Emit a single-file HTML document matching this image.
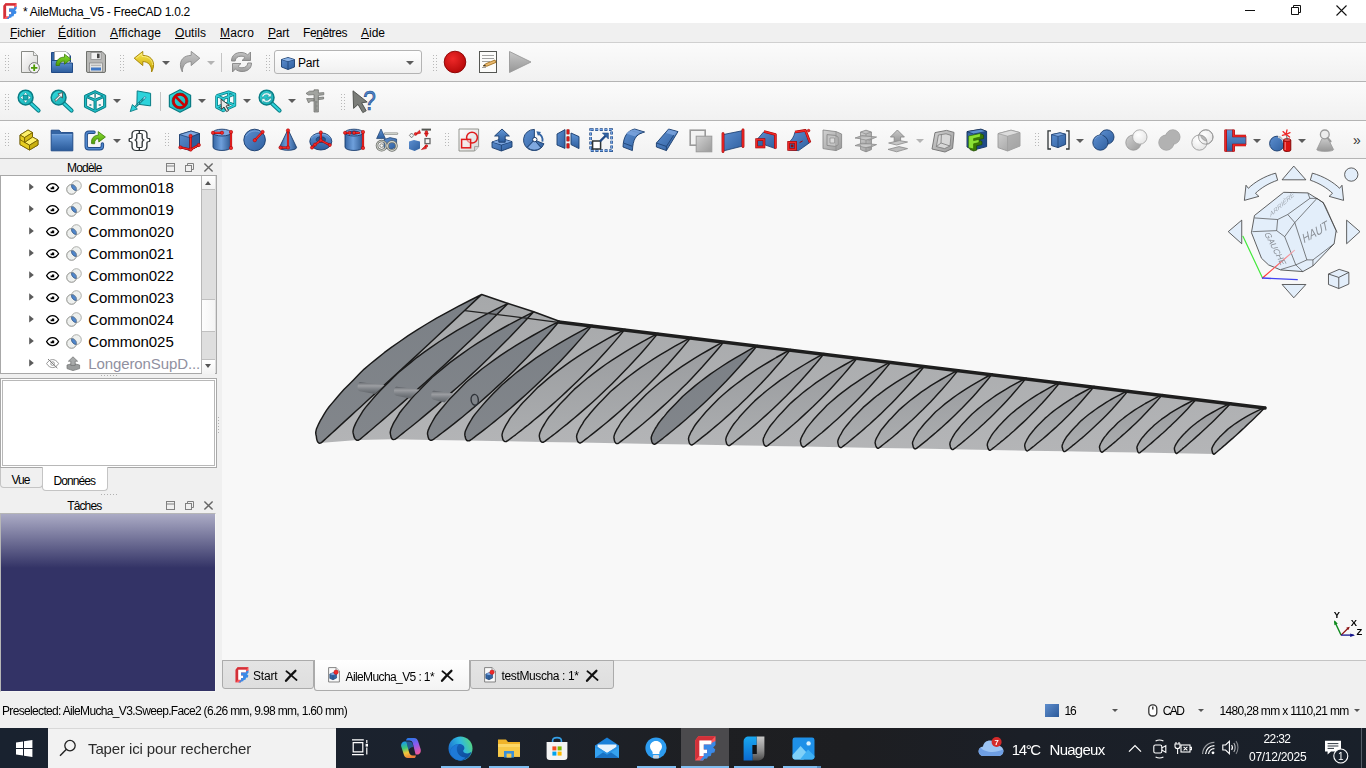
<!DOCTYPE html>
<html lang="fr"><head><meta charset="utf-8"><title>* AileMucha_V5 - FreeCAD 1.0.2</title>
<style>
html,body{margin:0;padding:0;}
body{width:1366px;height:768px;overflow:hidden;position:relative;background:#f0f0f0;font-family:"Liberation Sans",sans-serif;font-size:12px;color:#000;}
.t{position:absolute;white-space:pre;}
.a{position:absolute;}
svg{position:absolute;overflow:visible;}
.u{text-decoration:underline;text-underline-offset:1px;}
.tb{position:absolute;left:0;width:1366px;background:linear-gradient(#fbfbfb,#f1f1f1);border-bottom:1px solid #b4b4b4;}
.hd{position:absolute;width:3px;height:20px;background-image:radial-gradient(circle,#b8b8b8 0.6px,transparent 0.9px);background-size:3px 3px;}
.dd{position:absolute;width:0;height:0;border-left:4px solid transparent;border-right:4px solid transparent;border-top:4.4px solid #5c5c5c;}
.dd.g{border-top-color:#b4b4b4;}
</style></head><body>
<div class="a" style="left:0;top:0;width:1366px;height:23px;background:#fff"></div>
<span class="t " style="left:23.0px;top:3.8px;font-size:12px;line-height:17px;color:#000;letter-spacing:-0.281px;">* AileMucha_V5 - FreeCAD 1.0.2</span>
<div class="a" style="left:0;top:23px;width:1366px;height:19px;background:#f0f0f0;border-bottom:1px solid #d0d0d0"></div>
<span class="t" style="left:10px;top:25px;font-size:12px;line-height:16px;letter-spacing:-0.144px"><span class="u">F</span>ichier</span>
<span class="t" style="left:58px;top:25px;font-size:12px;line-height:16px;letter-spacing:0.187px"><span class="u">É</span>dition</span>
<span class="t" style="left:110px;top:25px;font-size:12px;line-height:16px;letter-spacing:0.131px"><span class="u">A</span>ffichage</span>
<span class="t" style="left:175px;top:25px;font-size:12px;line-height:16px;letter-spacing:0.054px"><span class="u">O</span>utils</span>
<span class="t" style="left:220px;top:25px;font-size:12px;line-height:16px;letter-spacing:0.132px"><span class="u">M</span>acro</span>
<span class="t" style="left:268px;top:25px;font-size:12px;line-height:16px;letter-spacing:-0.252px"><span class="u">P</span>art</span>
<span class="t" style="left:303px;top:25px;font-size:12px;line-height:16px;letter-spacing:-0.419px">Fe<span class="u">n</span>êtres</span>
<span class="t" style="left:361px;top:25px;font-size:12px;line-height:16px;letter-spacing:-0.004px"><span class="u">A</span>ide</span>
<div class="tb" style="top:43px;height:38px"></div>
<div class="tb" style="top:82px;height:38px"></div>
<div class="tb" style="top:121px;height:37px"></div>
<svg width="0" height="0" style="left:0;top:0"><defs>
<linearGradient id="gBlue" x1="0" y1="0" x2="1" y2="1"><stop offset="0" stop-color="#5d8fd0"/><stop offset="1" stop-color="#2f5f9f"/></linearGradient>
<linearGradient id="gBlueV" x1="0" y1="0" x2="0" y2="1"><stop offset="0" stop-color="#6296d6"/><stop offset="1" stop-color="#2c5c9c"/></linearGradient>
<linearGradient id="gBlueH" x1="0" y1="0" x2="1" y2="0"><stop offset="0" stop-color="#3465a4"/><stop offset="0.45" stop-color="#6fa0dc"/><stop offset="1" stop-color="#2c5890"/></linearGradient>
<linearGradient id="gGray" x1="0" y1="0" x2="1" y2="1"><stop offset="0" stop-color="#d2d2d2"/><stop offset="1" stop-color="#9a9a9a"/></linearGradient>
<linearGradient id="gGrayV" x1="0" y1="0" x2="0" y2="1"><stop offset="0" stop-color="#c8c8c8"/><stop offset="1" stop-color="#969696"/></linearGradient>
<linearGradient id="gYel" x1="0" y1="0" x2="0" y2="1"><stop offset="0" stop-color="#fce94f"/><stop offset="1" stop-color="#c4a000"/></linearGradient>
<linearGradient id="gGreen" x1="0" y1="0" x2="0" y2="1"><stop offset="0" stop-color="#8ae234"/><stop offset="1" stop-color="#4e9a06"/></linearGradient>
<linearGradient id="gPaper" x1="0" y1="0" x2="1" y2="1"><stop offset="0" stop-color="#ffffff"/><stop offset="1" stop-color="#d6d6d4"/></linearGradient>
<linearGradient id="gTeal" x1="0" y1="0" x2="1" y2="1"><stop offset="0" stop-color="#34e0e2"/><stop offset="1" stop-color="#16a9b0"/></linearGradient>
<radialGradient id="gRed" cx="0.4" cy="0.35" r="0.7"><stop offset="0" stop-color="#ef2929"/><stop offset="1" stop-color="#b40808"/></radialGradient>
</defs></svg>
<svg style="left:3px;top:2.9px" width="14" height="16" viewBox="255 105 280 335"><path d="M258 165 L300 110 H535 V175 L365 440 H258 Z" fill="#ff5a5e"/><path d="M258 165 L300 110 H535 L480 165 H315 V380 L258 440 Z" fill="#d23038"/>
<path d="M315 165 H480 V222 H375 V290 H420 V340 H375 V380 H315 Z" fill="#fff"/>
<path d="M535 175 V228 L503 262 L532 290 L520 332 L482 336 L470 380 L432 386 L420 412 L382 416 L365 440 H320 L375 380 V340 H420 V290 H375 V222 H480 V200 Z" fill="#3a8ae8"/></svg>
<svg style="left:1240px;top:5px" width="120" height="12" viewBox="0 0 120 12"><g fill="none" stroke="#111" stroke-width="1"><path d="M5 5.5 H15"/><path d="M51.5 2.5 H58.5 V9.5 H51.5 Z" /><path d="M53.5 2.5 V0.5 H60.5 V7.5 H58.5"/><path d="M96.5 0.5 L106.5 10.5 M106.5 0.5 L96.5 10.5" stroke-width="1.1"/></g></svg>
<div class="hd" style="left:4px;top:54px;height:17px;width:6px"></div>
<svg style="left:20px;top:50px" width="24" height="24" viewBox="0 0 24 24"><path d="M1.5 1.5 H13.5 L17.5 5.5 V22.5 H1.5 Z" fill="url(#gPaper)" stroke="#888a85" stroke-width="1"/><path d="M13.5 1.5 V5.5 H17.5" fill="#eee" stroke="#888a85" stroke-width="0.8"/>
<circle cx="14.2" cy="17.8" r="5.2" fill="#f4f4f4" stroke="#666" stroke-width="0.9"/><path d="M14.2 14.6 V21 M11 17.8 H17.4" stroke="#4e9a06" stroke-width="1.8"/></svg>
<svg style="left:50px;top:50px" width="24" height="24" viewBox="0 0 24 24"><path d="M1.5 2.5 H17 L20.5 6 V12 H1.5 Z" fill="#3465a4" stroke="#204a87"/><path d="M4.5 1.5 H16 L19.5 5 V14 H4.5 Z" fill="#fff" stroke="#999" stroke-width="0.7"/>
<path d="M1.5 10.5 H8 L9.5 13 H22.5 V22.5 H1.5 Z" fill="url(#gBlueV)" stroke="#204a87"/>
<path d="M6 15.5 C6 9.5 10 7 14.5 7.2 L14.5 4.2 L21 9.2 L14.5 14.2 L14.5 11.2 C11.5 11 9.5 12.5 9.5 15.5 Z" fill="url(#gGreen)" stroke="#3a7a04" stroke-width="0.8"/></svg>
<svg style="left:84px;top:50px" width="24" height="24" viewBox="0 0 24 24"><path d="M2.5 1.5 H18 L21.5 5 V21 Q21.5 22.5 20 22.5 H4 Q2.5 22.5 2.5 21 Z" fill="#b8b8b6" stroke="#6f716d" stroke-width="1"/>
<rect x="7" y="2.5" width="10" height="7" fill="#f2f2f2" stroke="#777" stroke-width="0.6"/><rect x="13" y="3.6" width="2.6" height="4.6" fill="#444"/>
<rect x="5.5" y="13" width="13" height="9" fill="#e4e4e2" stroke="#777" stroke-width="0.6"/><rect x="7" y="17.5" width="10" height="3" fill="#3f77c4"/><path d="M7 15.3 H17" stroke="#9a9a9a" stroke-width="0.8"/></svg>
<div class="hd" style="left:119px;top:54px;height:17px;width:6px"></div>
<svg style="left:133px;top:50px" width="24" height="24" viewBox="0 0 24 24"><path d="M1.2 8.2 L9.8 1.4 L9.8 5.4 C17 5.4 21.6 10 20.4 17 C19.9 19.5 19 21.4 18.6 22 C18.8 15.8 15.5 11.6 9.8 11.6 L9.8 15.6 Z" fill="url(#gYel)" stroke="#a08000" stroke-width="0.9" stroke-linejoin="round"/><path d="M3 8.2 L9 3.6 L9 6.4 C15.5 6.4 19.5 10 19.6 15" fill="none" stroke="#fff6a0" stroke-width="0.8" opacity="0.8"/></svg>
<div class="dd" style="left:162px;top:60.5px"></div>
<svg style="left:177px;top:50px" width="24" height="24" viewBox="0 0 24 24"><g transform="translate(24 0) scale(-1 1)"><path d="M1.2 8.2 L9.8 1.4 L9.8 5.4 C17 5.4 21.6 10 20.4 17 C19.9 19.5 19 21.4 18.6 22 C18.8 15.8 15.5 11.6 9.8 11.6 L9.8 15.6 Z" fill="url(#gGrayV)" stroke="#8a8a8a" stroke-width="0.9" stroke-linejoin="round"/></g></svg>
<div class="dd g" style="left:207px;top:60.5px"></div>
<div class="a" style="left:221px;top:53px;width:1px;height:19px;background:#c4c4c4"></div>
<svg style="left:230px;top:50px" width="23" height="24" viewBox="0 0 23 24"><g fill="url(#gGrayV)" stroke="#858585" stroke-width="0.9" stroke-linejoin="round"><path d="M1.5 11 C1.5 5 6 2.5 11 2.5 C14 2.5 16 3.4 17.6 5 L20.5 2 L20.5 10.5 L12 10.5 L15 7.6 C14 6.6 12.6 6.2 11 6.2 C7.6 6.2 5.4 8 5.2 11 Z"/>
<path d="M21.5 13 C21.5 19 17 21.5 12 21.5 C9 21.5 7 20.6 5.4 19 L2.5 22 L2.5 13.5 L11 13.5 L8 16.4 C9 17.4 10.4 17.8 12 17.8 C15.4 17.8 17.6 16 17.8 13 Z"/></g></svg>
<div class="hd" style="left:265px;top:54px;height:17px;width:6px"></div>
<div class="a" style="left:274px;top:50px;width:146px;height:22px;border:1px solid #b4b4b4;border-radius:3px;background:linear-gradient(#fefefe,#f0f0f0)"></div>
<svg style="left:279.5px;top:54.8px" width="16" height="16" viewBox="0 0 16 16"><path d="M1.5 4.5 L8 2.5 L14.5 4.5 L14.5 12 L8 14.5 L1.5 12 Z" fill="url(#gBlue)" stroke="#1c3f70" stroke-width="0.9"/><path d="M1.5 4.5 L8 6.5 L14.5 4.5 M8 6.5 V14.5" fill="none" stroke="#1c3f70" stroke-width="0.8"/><path d="M2 4.6 L8 2.9 L14 4.6 L8 6.2 Z" fill="#8db4e6"/></svg>
<span class="t " style="left:298.0px;top:54.7px;font-size:12px;line-height:17px;color:#000;letter-spacing:-0.252px;">Part</span>
<div class="dd" style="left:405.5px;top:60.5px"></div>
<div class="hd" style="left:432px;top:54px;height:17px;width:6px"></div>
<svg style="left:443px;top:50px" width="24" height="24" viewBox="0 0 24 24"><circle cx="12" cy="12" r="10.8" fill="url(#gRed)" stroke="#8a0000" stroke-width="0.9"/></svg>
<svg style="left:478px;top:50px" width="20" height="24" viewBox="0 0 20 24"><rect x="1.5" y="1.5" width="17" height="21" fill="#fcfcfa" stroke="#555753" stroke-width="1"/><path d="M4 5.5 H16 M4 8.5 H16 M4 11.5 H12 M4 17.5 H8" stroke="#8a8a8a" stroke-width="0.8"/>
<path d="M5 16 L8 13.6 L17 10 L18 12.4 L9 16.2 Z" fill="#e9b96e" stroke="#8f5902" stroke-width="0.7"/><path d="M5 16 L7 14.4 L7.8 16.2 Z" fill="#333"/></svg>
<svg style="left:508px;top:50px" width="24" height="24" viewBox="0 0 24 24"><path d="M1.5 1.5 L23 12 L1.5 22.5 Z" fill="url(#gGrayV)" stroke="#9a9a9a" stroke-width="0.9" stroke-linejoin="round"/></svg>
<div class="hd" style="left:4px;top:93px;height:17px;width:6px"></div>
<svg style="left:16.6px;top:89px" width="24" height="24" viewBox="0 0 24 24"><path d="M14 14.5 L21.5 21.5" stroke="#0a7d85" stroke-width="4.2" stroke-linecap="round"/><path d="M14 14.5 L21.5 21.5" stroke="#2fd3da" stroke-width="2.2" stroke-linecap="round"/><circle cx="8.6" cy="8.6" r="7.4" fill="url(#gTeal)" stroke="#0a7d85" stroke-width="1.5"/><path d="M8.6 3.2 L10.8 6 H6.4 Z M8.6 14 L10.8 11.2 H6.4 Z M3.2 8.6 L6 6.4 V10.8 Z M14 8.6 L11.2 6.4 V10.8 Z" fill="#fff" stroke="#0a7d85" stroke-width="0.5"/><rect x="6.6" y="6.6" width="4" height="4" fill="#16a9b0" stroke="#0a7d85" stroke-width="0.5"/></svg>
<svg style="left:49.6px;top:89px" width="24" height="24" viewBox="0 0 24 24"><path d="M14 14.5 L21.5 21.5" stroke="#0a7d85" stroke-width="4.2" stroke-linecap="round"/><path d="M14 14.5 L21.5 21.5" stroke="#2fd3da" stroke-width="2.2" stroke-linecap="round"/><circle cx="8.6" cy="8.6" r="7.4" fill="url(#gTeal)" stroke="#0a7d85" stroke-width="1.5"/><path d="M12.6 3.6 L12.4 9 L10.8 7.6 L6 12.4 L4.6 11 L9.4 6.2 L8 4.8 Z" fill="#f2f2f2" stroke="#444" stroke-width="0.8" stroke-linejoin="round"/></svg>
<svg style="left:83.9px;top:89.6px" width="22.2" height="23" viewBox="0 0 23 24"><path d="M11.5 1.2 L22 6 V17.5 L11.5 22.8 L1 17.5 V6 Z" fill="#f8f8f8" stroke="#0a7d85" stroke-width="1"/>
<g fill="none" stroke="#1fbcc4" stroke-width="2.2" stroke-linejoin="round"><path d="M11.5 1.8 L21.5 6.3 V17.2 L11.5 22.2 L1.5 17.2 V6.3 Z"/><path d="M1.5 6.3 L11.5 10.6 L21.5 6.3 M11.5 10.6 V22.2"/></g>
<g fill="none" stroke="#0a7d85" stroke-width="1" stroke-linejoin="round"><path d="M11.5 0.6 L22.6 5.7 V17.9 L11.5 23.4 L0.4 17.9 V5.7 Z"/><path d="M11.5 3 L19.6 6.4 L11.5 9.4 L3.4 6.4 Z"/><path d="M2.6 8 L10.4 11.4 V20.6 L2.6 16.6 Z"/><path d="M20.4 8 L12.6 11.4 V20.6 L20.4 16.6 Z"/></g>
<path d="M11.5 3.6 V8" stroke="#0a7d85" stroke-width="1.4"/><ellipse cx="6.6" cy="15.6" rx="1.4" ry="0.8" fill="#0a7d85"/><ellipse cx="16.4" cy="15.6" rx="1.4" ry="0.8" fill="#0a7d85"/></svg>
<div class="dd" style="left:113px;top:99px"></div>
<svg style="left:129px;top:89.5px" width="23" height="23" viewBox="0 0 23 23"><path d="M8.2 0.9 L21.6 3.3 L21.6 15.9 L7.9 14.1 Z" fill="#2cd3db" stroke="#0a7d85" stroke-width="1"/>
<path d="M15 8.4 L5.5 17.6" stroke="#0a7d85" stroke-width="2.2"/><path d="M15 8.4 L5.5 17.6" stroke="#7fe0e6" stroke-width="0.9" stroke-dasharray="2 1.4"/>
<path d="M1.2 21.6 L3.4 14.6 L8.4 19 Z" fill="#2cd3db" stroke="#0a7d85" stroke-width="0.9" stroke-linejoin="round"/><ellipse cx="15.4" cy="8" rx="1.6" ry="1" transform="rotate(-45 15.4 8)" fill="#bdf" stroke="#0a7d85" stroke-width="0.6"/></svg>
<div class="a" style="left:160px;top:92px;width:1px;height:19px;background:#c4c4c4"></div>
<svg style="left:168px;top:89.3px" width="24" height="24" viewBox="0 0 24 24"><path d="M12 0.8 L22.6 6.2 V17.8 L12 23.2 L1.4 17.8 V6.2 Z" fill="url(#gTeal)" stroke="#0a7d85" stroke-width="1.2" stroke-linejoin="round"/>
<circle cx="12" cy="12" r="6.6" fill="none" stroke="#c00" stroke-width="2.6"/><path d="M7.4 7.4 L16.6 16.6" stroke="#c00" stroke-width="2.6"/><circle cx="12" cy="12" r="8" fill="none" stroke="#700" stroke-width="0.5"/></svg>
<div class="dd" style="left:198px;top:99px"></div>
<svg style="left:214.5px;top:90px" width="22" height="23" viewBox="0 0 22 23"><path d="M1.2 5.4 L13.6 1.4 L20.4 3.6 V15.6 L8.2 21.4 L1.2 17.4 Z" fill="#f6fbfb"/>
<g fill="none" stroke="#0a7d85" stroke-width="2.8" stroke-linejoin="round"><path d="M1.6 5.6 L8.2 8.6 L19.8 4 M8.2 8.6 V20.8 M1.6 5.6 V17.2 L8.2 20.8 L19.8 15.4 V4 L13.6 1.8 L1.6 5.6 M13.6 1.8 V12.6 L1.6 17.2 M13.6 12.6 L19.8 15.4"/></g>
<g fill="none" stroke="#2fd0d8" stroke-width="1.3" stroke-linejoin="round"><path d="M1.6 5.6 L8.2 8.6 L19.8 4 M8.2 8.6 V20.8 M1.6 5.6 V17.2 L8.2 20.8 L19.8 15.4 V4 L13.6 1.8 L1.6 5.6 M13.6 1.8 V12.6 L1.6 17.2 M13.6 12.6 L19.8 15.4"/></g>
<path d="M6 9.2 L6.4 19.4 L9 17 L11.6 21.6 L13.6 20.6 L11 16 L14.4 15.4 Z" fill="#e8e8e8" stroke="#333" stroke-width="0.9" stroke-linejoin="round"/></svg>
<div class="dd" style="left:243px;top:99px"></div>
<svg style="left:257.8px;top:89px" width="24" height="24" viewBox="0 0 24 24"><path d="M14 14.5 L21.5 21.5" stroke="#0a7d85" stroke-width="4.2" stroke-linecap="round"/><path d="M14 14.5 L21.5 21.5" stroke="#2fd3da" stroke-width="2.2" stroke-linecap="round"/><circle cx="8.6" cy="8.6" r="7.4" fill="url(#gTeal)" stroke="#0a7d85" stroke-width="1.5"/><g fill="#e6fbfc" stroke="#0a7d85" stroke-width="0.5"><path d="M3.6 8 C3.8 5.4 6 3.8 8.6 3.8 C10 3.8 11 4.3 11.8 5 L13.2 3.6 V7.8 H9 L10.4 6.4 C9.9 6 9.3 5.8 8.6 5.8 C7 5.8 5.8 6.6 5.6 8 Z"/><path d="M13.6 9.2 C13.4 11.8 11.2 13.4 8.6 13.4 C7.2 13.4 6.2 12.9 5.4 12.2 L4 13.6 V9.4 H8.2 L6.8 10.8 C7.3 11.2 7.9 11.4 8.6 11.4 C10.2 11.4 11.4 10.6 11.6 9.2 Z"/></g></svg>
<div class="dd" style="left:288px;top:99px"></div>
<svg style="left:305px;top:89px" width="20" height="24" viewBox="0 0 20 24"><g fill="#a2a4a0" stroke="#6a6c68" stroke-width="0.7" stroke-linejoin="round"><path d="M1 4.4 L4.4 2.2 L9 2 V0.8 H13.4 V4 L18.8 3.6 V5.8 L13.4 6.4 V23 H9 V5.6 L3.4 6 Z"/><path d="M1.6 9.6 H9 V12 H5.6 L3.6 14 Z"/><path d="M13.4 8.6 L18.6 8 V10 L13.4 10.6 Z"/></g><path d="M10 13 H12.4 M10 15 H11.6 M10 17 H12.4 M10 19 H11.6 M10 21 H12.4" stroke="#555" stroke-width="0.6"/></svg>
<div class="hd" style="left:340px;top:93px;height:17px;width:6px"></div>
<svg style="left:352px;top:89.5px" width="24" height="24" viewBox="0 0 24 24"><path d="M1 0.8 L1.6 18.4 L6 14.4 L10.8 22.6 L14.2 20.8 L9.6 12.8 L15.2 12 Z" fill="#7b7d79" stroke="#4a4c48" stroke-width="0.9" stroke-linejoin="round"/>
<text x="11.2" y="20.2" font-family="Liberation Sans, sans-serif" font-size="27.5" fill="#4f86cc" stroke="#204a87" stroke-width="0.7" textLength="12.6" lengthAdjust="spacingAndGlyphs">?</text></svg>
<div class="hd" style="left:4px;top:132px;height:16px;width:6px"></div>
<svg style="left:19px;top:129px" width="20" height="22" viewBox="0 0 20 22"><g stroke="#6f5a00" stroke-width="0.8" stroke-linejoin="round"><path d="M1 6 L9 1 L13.5 3.6 V8 L19 11 V16 L10.5 21 L1 15.6 Z" fill="#f2dc3a"/>
<path d="M1 6 L5.6 8.6 L13.5 3.6 L9 1 Z" fill="#fdf06a"/><path d="M5.6 8.6 V13.4 L10.5 16.2 L19 11 L13.5 8 L5.6 13.4" fill="#fdf06a"/><path d="M1 6 V15.6 L10.5 21 V16.2 L5.6 13.4 V8.6 Z" fill="#e6cc20"/><path d="M10.5 16.2 L19 11 V16 L10.5 21 Z" fill="#c9b010"/><path d="M5.6 8.6 L13.5 3.6 V8 L5.6 13.4 Z" fill="#d6bc18"/><path d="M1 10.6 L5.6 13.4" fill="none"/></g></svg>
<svg style="left:50px;top:129px" width="24" height="23" viewBox="0 0 24 23"><path d="M1.2 1.2 H9.2 L11.2 3.6 H22.8 V21.8 H1.2 Z" fill="#3465a4" stroke="#204a87" stroke-width="1" stroke-linejoin="round"/><path d="M1.8 5.6 H22.2 V21.2 H1.8 Z" fill="url(#gBlueV)"/><path d="M1.8 5.6 H22.2" stroke="#8db4e6" stroke-width="0.8"/></svg>
<svg style="left:84px;top:129.5px" width="22" height="21" viewBox="0 0 22 21"><path d="M10 2.2 H5 Q2.2 2.2 2.2 5 V16 Q2.2 18.8 5 18.8 H15.6 Q18.4 18.8 18.4 16 V14" fill="none" stroke="#204a87" stroke-width="3.4" stroke-linecap="round"/><path d="M10 2.2 H5 Q2.2 2.2 2.2 5 V16 Q2.2 18.8 5 18.8 H15.6 Q18.4 18.8 18.4 16 V14" fill="none" stroke="#4f86cc" stroke-width="1.6" stroke-linecap="round"/>
<path d="M7.6 13.6 C7 8 10 5.4 14.4 5.2 L14.2 1.6 L21.4 7 L14.8 12 L14.6 8.6 C11.8 8.8 10.4 10.4 10.6 13.8 Z" fill="url(#gGreen)" stroke="#3a7a04" stroke-width="0.8" stroke-linejoin="round"/></svg>
<div class="dd" style="left:113px;top:138.5px"></div>
<svg style="left:128px;top:128px;will-change:transform" width="24" height="24" viewBox="0 0 24 24"><g font-family="Liberation Sans, sans-serif" font-size="20.5" font-weight="bold" fill="#fff" stroke="#2e3436" stroke-width="2.2" stroke-linejoin="round" paint-order="stroke"><text transform="translate(1.4 18.4) scale(1.25 1)">{</text><text transform="translate(11.6 18.4) scale(1.25 1)">}</text></g></svg>
<div class="hd" style="left:164px;top:132px;height:16px;width:6px"></div>
<svg style="left:178px;top:129px" width="23" height="23" viewBox="0 0 23 23"><path d="M1.5 5.6 L13 2 L21.5 4.6 V16.4 L11.5 21.4 L1.5 18.2 Z" fill="url(#gBlue)" stroke="#1a3c6c" stroke-width="0.9" stroke-linejoin="round"/><path d="M1.5 5.6 L11.5 8.6 L21.5 4.6 L13 2 Z" fill="#7fa8e0" stroke="#1a3c6c" stroke-width="0.7" stroke-linejoin="round"/><path d="M11.5 8.6 V21.4 L21.5 16.4 V4.6 Z" fill="#2f5c9c" stroke="#1a3c6c" stroke-width="0.7" stroke-linejoin="round"/><path d="M2.4 18.4 L12.6 20.6 L20.8 16 M12.6 20.6 V7" fill="none" stroke="#a40000" stroke-width="2.2" stroke-linecap="round"/><path d="M2.4 18.4 L12.6 20.6 L20.8 16 M12.6 20.6 V7" fill="none" stroke="#ef2929" stroke-width="1.4" stroke-linecap="round"/><circle cx="2.4" cy="18.4" r="1.7" fill="#ef2929" stroke="#a40000" stroke-width="0.5"/><circle cx="12.6" cy="20.6" r="1.7" fill="#ef2929" stroke="#a40000" stroke-width="0.5"/><circle cx="20.8" cy="16" r="1.7" fill="#ef2929" stroke="#a40000" stroke-width="0.5"/><circle cx="12.6" cy="7" r="1.7" fill="#ef2929" stroke="#a40000" stroke-width="0.5"/></svg>
<svg style="left:211px;top:128px" width="22" height="24" viewBox="0 0 22 24"><path d="M2 4.6 V19 C2 23.6 20 23.6 20 19 V4.6 Z" fill="url(#gBlueH)" stroke="#1a3c6c" stroke-width="0.9"/><ellipse cx="11" cy="4.6" rx="9" ry="3.4" fill="#7fa8e0" stroke="#1a3c6c" stroke-width="0.9"/><path d="M2 4.8 H11 M20 4 V20" fill="none" stroke="#a40000" stroke-width="2.2" stroke-linecap="round"/><path d="M2 4.8 H11 M20 4 V20" fill="none" stroke="#ef2929" stroke-width="1.4" stroke-linecap="round"/><circle cx="2" cy="4.8" r="1.7" fill="#ef2929" stroke="#a40000" stroke-width="0.5"/><circle cx="11" cy="4.8" r="1.7" fill="#ef2929" stroke="#a40000" stroke-width="0.5"/><circle cx="20" cy="4" r="1.7" fill="#ef2929" stroke="#a40000" stroke-width="0.5"/><circle cx="20" cy="20" r="1.7" fill="#ef2929" stroke="#a40000" stroke-width="0.5"/></svg>
<svg style="left:243px;top:128px" width="24" height="24" viewBox="0 0 24 24"><circle cx="11.6" cy="12" r="10.8" fill="url(#gBlue)" stroke="#1a3c6c" stroke-width="0.9"/><path d="M3 8 C6 2.6 14 1.6 18.6 5" fill="none" stroke="#8db4e6" stroke-width="0.9" opacity="0.7"/><path d="M11.8 12.2 L19.6 4" fill="none" stroke="#a40000" stroke-width="2.2" stroke-linecap="round"/><path d="M11.8 12.2 L19.6 4" fill="none" stroke="#ef2929" stroke-width="1.4" stroke-linecap="round"/><circle cx="11.8" cy="12.2" r="1.7" fill="#ef2929" stroke="#a40000" stroke-width="0.5"/><circle cx="19.6" cy="4" r="1.7" fill="#ef2929" stroke="#a40000" stroke-width="0.5"/></svg>
<svg style="left:278px;top:128px" width="20" height="24" viewBox="0 0 20 24"><path d="M10 1.6 L18.6 19.4 C18.6 23.2 1.4 23.2 1.4 19.4 Z" fill="url(#gBlueH)" stroke="#1a3c6c" stroke-width="0.9" stroke-linejoin="round"/><path d="M10 2.4 V19.6 H2.6" fill="none" stroke="#a40000" stroke-width="2.2" stroke-linecap="round"/><path d="M10 2.4 V19.6 H2.6" fill="none" stroke="#ef2929" stroke-width="1.4" stroke-linecap="round"/><circle cx="10" cy="2.4" r="1.7" fill="#ef2929" stroke="#a40000" stroke-width="0.5"/><circle cx="10" cy="19.6" r="1.7" fill="#ef2929" stroke="#a40000" stroke-width="0.5"/><circle cx="2.6" cy="19.6" r="1.7" fill="#ef2929" stroke="#a40000" stroke-width="0.5"/></svg>
<svg style="left:309px;top:130px" width="24" height="21" viewBox="0 0 24 21"><ellipse cx="11.8" cy="11.4" rx="11" ry="8.6" fill="url(#gBlueV)" stroke="#1a3c6c" stroke-width="0.9"/><ellipse cx="11.8" cy="9.6" rx="4.6" ry="2.8" fill="#2a568f" stroke="#1a3c6c" stroke-width="0.8"/><path d="M2 8.6 C4 3 19 2.6 21.6 8.4" fill="none" stroke="#8db4e6" stroke-width="0.9" opacity="0.8"/><path d="M11.8 2.4 V10.4 L20.8 15 M11.8 10.4 L6 14.6 L3 17.6" fill="none" stroke="#a40000" stroke-width="2.2" stroke-linecap="round"/><path d="M11.8 2.4 V10.4 L20.8 15 M11.8 10.4 L6 14.6 L3 17.6" fill="none" stroke="#ef2929" stroke-width="1.4" stroke-linecap="round"/><circle cx="11.8" cy="2.4" r="1.6" fill="#ef2929" stroke="#a40000" stroke-width="0.5"/><circle cx="11.8" cy="10.4" r="1.6" fill="#ef2929" stroke="#a40000" stroke-width="0.5"/><circle cx="20.8" cy="15" r="1.6" fill="#ef2929" stroke="#a40000" stroke-width="0.5"/><circle cx="6" cy="14.6" r="1.6" fill="#ef2929" stroke="#a40000" stroke-width="0.5"/><circle cx="3" cy="17.6" r="1.6" fill="#ef2929" stroke="#a40000" stroke-width="0.5"/></svg>
<svg style="left:343px;top:128px" width="22" height="24" viewBox="0 0 22 24"><path d="M2 4.6 V19 C2 23.6 20 23.6 20 19 V4.6 Z" fill="url(#gBlueH)" stroke="#1a3c6c" stroke-width="0.9"/><ellipse cx="11" cy="4.6" rx="9" ry="3.4" fill="#7fa8e0" stroke="#1a3c6c" stroke-width="0.9"/><ellipse cx="11" cy="4.6" rx="5" ry="1.8" fill="#2a568f" stroke="#1a3c6c" stroke-width="0.6"/><path d="M2 4.8 H7 M11 4.8 H16 M20 4 V20" fill="none" stroke="#a40000" stroke-width="2.2" stroke-linecap="round"/><path d="M2 4.8 H7 M11 4.8 H16 M20 4 V20" fill="none" stroke="#ef2929" stroke-width="1.4" stroke-linecap="round"/><circle cx="2" cy="4.8" r="1.6" fill="#ef2929" stroke="#a40000" stroke-width="0.5"/><circle cx="6.6" cy="4.8" r="1.6" fill="#ef2929" stroke="#a40000" stroke-width="0.5"/><circle cx="11" cy="4.8" r="1.6" fill="#ef2929" stroke="#a40000" stroke-width="0.5"/><circle cx="20" cy="4" r="1.7" fill="#ef2929" stroke="#a40000" stroke-width="0.5"/><circle cx="20" cy="20" r="1.7" fill="#ef2929" stroke="#a40000" stroke-width="0.5"/></svg>
<svg style="left:375px;top:128px" width="23" height="24" viewBox="0 0 23 24"><path d="M6 1 L10.4 10.6 H1.6 Z" fill="url(#gBlueV)" stroke="#1a3c6c" stroke-width="0.7" stroke-linejoin="round"/><path d="M10 5.6 H22" stroke="#888a85" stroke-width="2.4" stroke-linecap="round"/><path d="M10 5.6 H22" stroke="#d3d7cf" stroke-width="1" stroke-linecap="round"/>
<path d="M9 11.6 L15 9.6 L21.6 11 V19 L15 21.6 L9 19.6 Z" fill="url(#gBlue)" stroke="#1a3c6c" stroke-width="0.7" stroke-linejoin="round"/>
<g fill="none" stroke="#6a6c68" stroke-width="2.6"><circle cx="6.6" cy="17.6" r="4.6"/><circle cx="17" cy="18" r="4.4"/></g><g fill="none" stroke="#d3d7cf" stroke-width="1.1"><circle cx="6.6" cy="17.6" r="4.6"/><circle cx="17" cy="18" r="4.4"/></g><circle cx="6.6" cy="17.6" r="1.8" fill="none" stroke="#888a85" stroke-width="1"/></svg>
<svg style="left:408px;top:128px" width="24" height="24" viewBox="0 0 24 24"><path d="M1 13.6 L6 12 L12 13.4 V20.6 L6.6 23 L1 21 Z" fill="url(#gBlue)" stroke="%s" stroke-width="0.7" stroke-linejoin="round"/><path d="M1 13.6 L6.6 15.2 L12 13.4 M6.6 15.2 V23" fill="none" stroke="%s" stroke-width="0.6"/>
<path d="M3.6 5 L5.8 7.4 L3.6 9.8 L1.4 7.4 Z" fill="#eee" stroke="#666" stroke-width="0.8"/><rect x="17" y="10.6" width="5" height="5" fill="#f4f4f4" stroke="#666" stroke-width="1.3"/><path d="M13.6 1.6 H23" stroke="#555753" stroke-width="2"/>
<g fill="#ef2929" stroke="#a40000" stroke-width="0.5" stroke-linejoin="round"><path d="M7 6.4 L11.6 2.2 L12.6 5.2 Z"/><path d="M16.4 5 H20.4 L18.4 9 Z"/><path d="M13.4 21.6 L17.6 17.4 L18.4 20.6 Z"/><circle cx="7.6" cy="6" r="1.4"/><circle cx="18.4" cy="4" r="1.3"/><circle cx="18.4" cy="18" r="1.3"/></g></svg>
<div class="hd" style="left:444px;top:132px;height:16px;width:6px"></div>
<svg style="left:458px;top:128px" width="22" height="24" viewBox="0 0 22 24"><path d="M1 1 H20.6 V18.6 L16.6 23 H1 Z" fill="url(#gPaper)" stroke="#888a85" stroke-width="0.9"/><path d="M20.6 18.6 H16.6 V23" fill="#ddd" stroke="#888a85" stroke-width="0.7"/>
<circle cx="14" cy="9.6" r="5.4" fill="none" stroke="#e01b1b" stroke-width="1.5"/><rect x="3.6" y="11.4" width="9" height="8.4" fill="#fbeaea" fill-opacity="0.5" stroke="#e01b1b" stroke-width="1.5"/></svg>
<svg style="left:491px;top:128px" width="22" height="24" viewBox="0 0 22 24"><path d="M1 14 L11 10.6 L21 13.6 V19 L10.4 23 L1 19.6 Z" fill="url(#gBlue)" stroke="#1a3c6c" stroke-width="0.9" stroke-linejoin="round"/><path d="M1 14 L10.4 17 L21 13.6 M10.4 17 V23" fill="none" stroke="#1a3c6c" stroke-width="0.8"/><path d="M1.6 14 L11 11.2 L20.4 13.7 L10.4 16.4 Z" fill="#7fa8e0"/>
<path d="M11 1 L18.4 8 H14.2 V14.2 H7.8 V8 H3.6 Z" fill="url(#gBlueV)" stroke="#1a3c6c" stroke-width="0.9" stroke-linejoin="round"/></svg>
<svg style="left:523px;top:128px" width="24" height="24" viewBox="0 0 24 24"><path d="M11.4 1.4 A10.6 10.6 0 1 0 21 15.8 L11.4 12 Z" fill="url(#gBlue)" stroke="#1a3c6c" stroke-width="0.9" stroke-linejoin="round"/><path d="M4 19.6 L11.4 12 L18.4 20" fill="none" stroke="#1a3c6c" stroke-width="0.9"/><path d="M11.4 12 L4.4 19.4 A10.4 10.4 0 0 0 18 19.8 Z" fill="#7fa8e0" stroke="#1a3c6c" stroke-width="0.7"/>
<circle cx="11.8" cy="11.6" r="2.2" fill="#fff" stroke="#1a3c6c" stroke-width="1"/><path d="M15 5.4 A7.6 7.6 0 0 1 19.4 13.6" fill="none" stroke="#3465a4" stroke-width="1.8"/><path d="M13.4 3.2 L18 4 L15 8 Z" fill="#3465a4"/></svg>
<svg style="left:556px;top:128px" width="24" height="24" viewBox="0 0 24 24"><path d="M1 6 L9 1.6 V20.4 L1 17 Z" fill="url(#gBlue)" stroke="#1a3c6c" stroke-width="0.9" stroke-linejoin="round"/><path d="M15 5 L23 8.6 V20.6 L15 16.6 Z" fill="url(#gBlueV)" stroke="#1a3c6c" stroke-width="0.9" stroke-linejoin="round"/>
<path d="M12 1.6 V22.6" stroke="#7a0000" stroke-width="3" stroke-dasharray="4.6 2.4"/><path d="M12 1.6 V22.6" stroke="#e01b1b" stroke-width="1.8" stroke-dasharray="4.6 2.4"/></svg>
<svg style="left:589px;top:128px" width="24" height="24" viewBox="0 0 24 24"><rect x="1.6" y="1.6" width="21" height="21" fill="none" stroke="#204a87" stroke-width="2.6" stroke-dasharray="3 1.6"/><rect x="1.6" y="1.6" width="21" height="21" fill="none" stroke="#6f9fe0" stroke-width="1.2" stroke-dasharray="3 1.6"/>
<rect x="3.6" y="13" width="8" height="8" fill="#fff" stroke="#2e3436" stroke-width="1.5"/><path d="M11 13.4 L18 6.4" stroke="#204a87" stroke-width="2.2"/><path d="M13.4 5 H19.4 V11 Z" fill="#3465a4" stroke="#204a87" stroke-width="0.6"/></svg>
<svg style="left:622px;top:128px" width="24" height="24" viewBox="0 0 24 24"><path d="M12.6 1 L22.6 4 C13.4 6.4 11 11.6 10.4 22.6 L1 19 C1.4 8.6 5 3 12.6 1 Z" fill="url(#gBlue)" stroke="#1a3c6c" stroke-width="0.9" stroke-linejoin="round"/><path d="M1.4 15 L10.6 18.4 M10 3 L19.6 5.4" fill="none" stroke="#1a3c6c" stroke-width="0.8"/><path d="M12.6 1.6 L21 4 C17 5 14.6 6.6 13.2 8.4 L4 5.6 C6 3.6 9 2.2 12.6 1.6Z" fill="#7fa8e0" opacity="0.8"/></svg>
<svg style="left:655px;top:128px" width="24" height="24" viewBox="0 0 24 24"><path d="M13.6 1 L23 3.6 L11.4 22.6 L1.4 19 V15 Z" fill="url(#gBlue)" stroke="#1a3c6c" stroke-width="0.9" stroke-linejoin="round"/><path d="M1.4 15 L11.4 18.4 V22.6 M11.4 18.4 L20.4 4.6" fill="none" stroke="#1a3c6c" stroke-width="0.8"/><path d="M13.6 1.6 L22 3.8 L19.6 7.4 L11 5 Z" fill="#7fa8e0" opacity="0.8"/></svg>
<svg style="left:688.5px;top:128.5px" width="24" height="24" viewBox="0 0 24 24"><rect x="1.2" y="1.2" width="15" height="15" fill="#f2f2f2" stroke="#9a9a9a" stroke-width="1.6"/><rect x="7.2" y="7.2" width="15.6" height="15.6" fill="url(#gGray)" stroke="#9a9a9a" stroke-width="1"/></svg>
<svg style="left:721px;top:128.5px" width="24" height="24" viewBox="0 0 24 24"><path d="M2 5.6 L22 1.6 V17 L2 22 Z" fill="url(#gBlue)" stroke="#1a3c6c" stroke-width="0.8"/><path d="M2 4.6 V22.6 M22 0.8 V17.6" stroke="#a40000" stroke-width="2.8" stroke-linecap="round"/><path d="M2 4.6 V22.6 M22 0.8 V17.6" stroke="#ef2929" stroke-width="1.6" stroke-linecap="round"/></svg>
<svg style="left:755px;top:130px" width="22" height="20" viewBox="0 0 22 20"><path d="M2 9.6 L9 1.6 L20.4 4.6 V18.6 L9 14.6 L2 17 Z" fill="url(#gBlue)" stroke="#1a3c6c" stroke-width="0.8" stroke-linejoin="round"/><path d="M9 1.6 L20.4 4.6 V18.6" fill="none" stroke="#a40000" stroke-width="2.6" stroke-linejoin="round"/><path d="M9 1.6 L20.4 4.6 V18.6" fill="none" stroke="#ef2929" stroke-width="1.5" stroke-linejoin="round"/>
<rect x="1.6" y="9.6" width="7.4" height="7.4" fill="#3465a4" stroke="#a40000" stroke-width="2.6"/><rect x="1.6" y="9.6" width="7.4" height="7.4" fill="none" stroke="#ef2929" stroke-width="1.4"/></svg>
<svg style="left:787px;top:128.5px" width="24" height="23" viewBox="0 0 24 23"><path d="M8 3 L18.4 1.4 C20 6 21.6 10 23 13.4 L11.6 21.6 L1.6 21 V13.6 C5 11 7 7.6 8 3 Z" fill="url(#gBlue)" stroke="#1a3c6c" stroke-width="0.8" stroke-linejoin="round"/><path d="M8 3 L18.4 1.4 L23 13.4" fill="none" stroke="#a40000" stroke-width="2.6" stroke-linejoin="round"/><path d="M8 3 L18.4 1.4 L23 13.4" fill="none" stroke="#ef2929" stroke-width="1.5" stroke-linejoin="round"/>
<rect x="1.6" y="13.4" width="7" height="7" fill="#3465a4" stroke="#a40000" stroke-width="2.6"/><rect x="1.6" y="13.4" width="7" height="7" fill="none" stroke="#ef2929" stroke-width="1.4"/><rect x="3.8" y="15.6" width="2.6" height="2.6" fill="#a40000"/><circle cx="21.6" cy="1.6" r="1.3" fill="#ef2929" stroke="#a40000" stroke-width="0.6"/><path d="M12.6 13.6 L15.6 12" stroke="#a40000" stroke-width="1"/></svg>
<svg style="left:822px;top:129px" width="20" height="22" viewBox="0 0 20 22"><path d="M1 1 L14 2.6 L19.6 5 V19 L14 21.6 L1 19.6 Z" fill="url(#gGray)" stroke="#8a8a8a" stroke-width="0.9" stroke-linejoin="round"/><path d="M5 5.6 L13 6.4 L16 8 V16 L13 17.4 L5 16.4 Z" fill="#c4c4c4" stroke="#8a8a8a" stroke-width="0.9"/><path d="M8 9 H12.6 V14 H8 Z" fill="#dadada" stroke="#8a8a8a" stroke-width="0.7"/><path d="M14 2.6 V21.6" stroke="#8a8a8a" stroke-width="0.7"/></svg>
<svg style="left:854px;top:128.5px" width="24" height="24" viewBox="0 0 24 24"><path d="M6.6 3 L12 1.2 L17.4 3 V20.6 L12 22.8 L6.6 20.6 Z" fill="url(#gGray)" stroke="#8a8a8a" stroke-width="0.9" stroke-linejoin="round"/><path d="M6.6 3 L12 5 L17.4 3 M12 5 V22.8" fill="none" stroke="#8a8a8a" stroke-width="0.7"/>
<path d="M1 9 L8 6.6 L22.6 8 L15.6 11 Z M1 16.6 L8 14.2 L22.6 15.6 L15.6 18.6 Z" fill="#b4b4b4" stroke="#8a8a8a" stroke-width="0.8" stroke-linejoin="round"/><path d="M6.6 8.4 V10 L12 11 L17.4 9.6 V8 M6.6 16 V17.6 L12 18.6 L17.4 17.2 V15.6" fill="#c8c8c8" stroke="#8a8a8a" stroke-width="0.6"/></svg>
<svg style="left:887px;top:128.5px" width="22" height="24" viewBox="0 0 22 24"><path d="M10.4 1 L17.4 8 H13.6 V13.4 H7.2 V8 H3.4 Z" fill="url(#gGrayV)" stroke="#8a8a8a" stroke-width="0.9" stroke-linejoin="round"/><path d="M1.6 14 L12.4 11.6 L20.6 13 L9.6 16 Z" fill="#c6c6c6" stroke="#8a8a8a" stroke-width="0.8" stroke-linejoin="round"/><path d="M1 20.4 L12 17.6 L20.6 19.6 L9.6 22.8 Z" fill="#bcbcbc" stroke="#8a8a8a" stroke-width="0.8" stroke-linejoin="round"/></svg>
<div class="dd g" style="left:916px;top:138.5px"></div>
<svg style="left:931px;top:128.5px" width="24" height="24" viewBox="0 0 24 24"><path d="M4 3.6 L15.6 1.4 L23 3.4 L21.6 19.4 L14 23 L1 20 Z" fill="url(#gGray)" stroke="#7a7a7a" stroke-width="1" stroke-linejoin="round"/><path d="M7.4 6 L15 4.8 L20 6.4 L19 17 L13.6 19.6 L5.4 17.6 Z" fill="#d8d8d8" stroke="#7a7a7a" stroke-width="0.8" stroke-linejoin="round"/><path d="M10.4 5.6 L10 14 L5.4 17.6 M10 14 L19 17" fill="none" stroke="#7a7a7a" stroke-width="0.8"/></svg>
<svg style="left:965px;top:128px" width="23" height="24" viewBox="0 0 23 24"><path d="M2 3.6 L16 1.2 L21.6 3.4 V18.6 L8.6 22 L2 19 Z" fill="#3465a4" stroke="#10284c" stroke-width="0.9" stroke-linejoin="round"/><path d="M2 3.6 L8.6 6 L21.6 3.4 L16 1.2 Z" fill="#5b8ed0" stroke="#10284c" stroke-width="0.6"/><path d="M8.6 6 L21.6 3.4 V18.6 L8.6 22 Z" fill="#1f4b88"/>
<path d="M5 8.6 L16.6 6 L18.6 7 V10.6 L11.6 12 V13.6 L15.6 12.8 L17 13.6 V16.6 L11.6 17.8 V22.2 L8.6 23 L5 21.6 Z" fill="#3a7a04" stroke="#1c4a00" stroke-width="0.7" stroke-linejoin="round"/><path d="M3.6 8 L15.4 5.4 V9 L8.6 10.6 V12.6 L14 11.4 V14.6 L8.6 15.8 V21 L3.6 19.8 Z" fill="#8ae234" stroke="#2f6a02" stroke-width="0.7" stroke-linejoin="round"/></svg>
<svg style="left:997px;top:129px" width="24" height="23" viewBox="0 0 24 23"><path d="M1 4.6 L14 1.2 L23 3.6 V17 L10.6 22 L1 18.6 Z" fill="url(#gGray)" stroke="#9a9a9a" stroke-width="0.9" stroke-linejoin="round"/><path d="M1 4.6 L10.6 7.2 L23 3.6 L14 1.2 Z" fill="#dcdcdc" stroke="#9a9a9a" stroke-width="0.7"/><path d="M10.6 7.2 V22" stroke="#9a9a9a" stroke-width="0.8"/><path d="M10.6 7.2 L23 3.6 V17 L10.6 22 Z" fill="#a8a8a8" opacity="0.6"/></svg>
<div class="hd" style="left:1034px;top:132px;height:16px;width:6px"></div>
<svg style="left:1046.5px;top:130px" width="23" height="20" viewBox="0 0 23 20"><path d="M4.6 4.6 L13 2.8 L18.6 4.2 V14.4 L11 17.6 L4.6 15.6 Z" fill="url(#gBlue)" stroke="#1a3c6c" stroke-width="0.9" stroke-linejoin="round"/><path d="M4.6 4.6 L11 6.4 L18.6 4.2 L13 2.8 Z" fill="#7fa8e0" stroke="#1a3c6c" stroke-width="0.6"/><path d="M11 6.4 V17.6" stroke="#1a3c6c" stroke-width="0.7"/>
<path d="M4 0.8 H1 V19 H4 M19 0.8 H22 V19 H19" fill="none" stroke="#2e3436" stroke-width="1.3"/></svg>
<div class="dd" style="left:1075.5px;top:138.5px"></div>
<svg style="left:1091.5px;top:129px" width="23" height="22" viewBox="0 0 23 22"><circle cx="14.8" cy="8" r="7.2" fill="url(#gBlue)" stroke="#1a3c6c" stroke-width="0.9"/><circle cx="8.4" cy="13.6" r="7.6" fill="url(#gBlue)" stroke="#1a3c6c" stroke-width="0.9"/><path d="M3 10 C4.6 7 8 6 10.6 6.6" fill="none" stroke="#8db4e6" stroke-width="0.8" opacity="0.7"/></svg>
<svg width="0" height="0" style="left:0;top:0"><defs><radialGradient id="gWh" cx="0.4" cy="0.35" r="0.7"><stop offset="0" stop-color="#ffffff"/><stop offset="1" stop-color="#e4e4e4"/></radialGradient></defs></svg>
<svg style="left:1124.5px;top:129px" width="23" height="22" viewBox="0 0 23 22"><circle cx="8.4" cy="13.6" r="7.6" fill="url(#gGray)" stroke="#9a9a9a" stroke-width="0.9"/><circle cx="14.8" cy="8" r="7.2" fill="url(#gWh)" stroke="#a8a8a8" stroke-width="0.9"/></svg>
<svg style="left:1157.5px;top:129px" width="23" height="22" viewBox="0 0 23 22"><circle cx="14.8" cy="8" r="7.2" fill="#b2b2b2" stroke="#a0a0a0" stroke-width="0.9"/><circle cx="8.4" cy="13.6" r="7.6" fill="#b2b2b2" stroke="#a0a0a0" stroke-width="0.9"/><circle cx="14.8" cy="8" r="6.8" fill="#b2b2b2"/><circle cx="8.4" cy="13.6" r="7.2" fill="#b2b2b2"/></svg>
<svg style="left:1190.5px;top:129px" width="23" height="22" viewBox="0 0 23 22"><circle cx="14.8" cy="8" r="7.2" fill="url(#gWh)" stroke="#9a9a9a" stroke-width="0.9"/><circle cx="8.4" cy="13.6" r="7.6" fill="url(#gWh)" stroke="#9a9a9a" stroke-width="0.9"/><path d="M9.6 6.2 A7.6 7.6 0 0 1 15.8 12 A7.2 7.2 0 0 1 9.6 6.2 Z" fill="#b8b8b8" stroke="#9a9a9a" stroke-width="0.7"/><circle cx="14.8" cy="8" r="7.2" fill="none" stroke="#9a9a9a" stroke-width="0.9"/></svg>
<svg style="left:1223.5px;top:128.5px" width="23" height="23" viewBox="0 0 23 23"><path d="M1.6 0.8 H9.6 V7 H22 V16 H9.6 V22.4 H1.6 Z" fill="url(#gBlueV)" stroke="#a40000" stroke-width="0.6"/><path d="M1.6 0.8 V22.4 M9.6 0.8 V7 H22 M22 16 H9.6 V22.4" fill="none" stroke="#a40000" stroke-width="2.6"/><path d="M1.6 0.8 V22.4 M9.6 0.8 V7 H22 M22 16 H9.6 V22.4" fill="none" stroke="#ef2929" stroke-width="1.5"/></svg>
<div class="dd" style="left:1253px;top:138.5px"></div>
<svg style="left:1268.5px;top:128.5px" width="24" height="23" viewBox="0 0 24 23"><circle cx="8" cy="14.6" r="7.4" fill="url(#gBlue)" stroke="#1a3c6c" stroke-width="0.9"/><path d="M9 8 A6 6 0 0 1 15 14" fill="none" stroke="#eee" stroke-width="2.2"/><path d="M9 8 A6 6 0 0 1 15 14" fill="none" stroke="#888" stroke-width="0.6"/>
<path d="M14.6 11 H21.8 V21 C21.8 23 14.6 23 14.6 21 Z" fill="#d81414" stroke="#7a0000" stroke-width="0.9"/><ellipse cx="18.2" cy="11" rx="3.6" ry="1.4" fill="#f05a5a" stroke="#7a0000" stroke-width="0.7"/><path d="M16.2 13 V21" stroke="#ff8a8a" stroke-width="1"/>
<path d="M18.2 10.6 C18 8 17.4 7 17 5.6" fill="none" stroke="#555" stroke-width="1"/><path d="M17 5.4 L14 2.6 M17 5.4 L18 1 M17 5.4 L21 3.6 M17 5.4 L13.4 6.4 M17 5.4 L20.6 8" stroke="#ef2929" stroke-width="1.3" stroke-linecap="round"/></svg>
<div class="dd" style="left:1298px;top:138.5px"></div>
<svg style="left:1316px;top:128.5px" width="19" height="23" viewBox="0 0 19 23"><path d="M6 9.6 L12 9.6 L17.6 20.6 C17.6 23 0.8 23 0.8 20.6 Z" fill="url(#gGrayV)" stroke="#9a9a9a" stroke-width="0.8" stroke-linejoin="round"/><circle cx="8.8" cy="5.4" r="4.4" fill="#ececec" stroke="#9a9a9a" stroke-width="1.3"/><path d="M11.6 8.8 L14.6 12.4" stroke="#9a9a9a" stroke-width="2" stroke-linecap="round"/></svg>
<span class="t " style="left:1353.0px;top:129.5px;font-size:14px;line-height:20px;color:#333;">»</span>
<span class="t " style="left:67.0px;top:159.5px;font-size:12px;line-height:17px;color:#000;letter-spacing:-0.810px;">Modèle</span>
<svg style="left:165px;top:163px" width="50" height="10" viewBox="0 0 50 10"><g fill="none" stroke="#808080" stroke-width="1"><rect x="1.5" y="0.5" width="8" height="8"/><path d="M1.5 3 H9.5"/><rect x="20.5" y="2.5" width="6" height="6"/><path d="M22.5 2.5 V0.5 H28.5 V6.5 H26.5"/></g><path d="M39.4 0.4 L47.6 8.6 M47.6 0.4 L39.4 8.6" stroke="#666" stroke-width="1.4" fill="none"/></svg>
<div class="a" style="left:0;top:175px;width:215px;height:197px;background:#fff;border:1px solid #a8a8a8"></div>
<svg style="left:28.6px;top:183.2px" width="5" height="8" viewBox="0 0 5 8"><path d="M0.2 0.2 L4.8 3.9 L0.2 7.6 Z" fill="#5a5a5a"/></svg>
<svg style="left:45.5px;top:182.6px" width="13.2" height="9.2" viewBox="0 0 13.2 9.2"><path d="M0.6 4.6 C2.4 1.4 5 0.6 6.6 0.6 C8.2 0.6 10.8 1.4 12.6 4.6 C10.8 7.8 8.2 8.6 6.6 8.6 C5 8.6 2.4 7.8 0.6 4.6 Z" fill="#fff" stroke="#000" stroke-width="1.2"/><path d="M4.6 4.4 H6 V3.4 H8.2 V6.2 H4.6 Z" fill="#000"/></svg>
<svg style="left:65.5px;top:179.7px" width="16" height="15" viewBox="0 0 16 15"><circle cx="5.6" cy="9.4" r="4.9" fill="#eef0ee" stroke="#9a9c98" stroke-width="0.8"/><circle cx="10.4" cy="5.6" r="4.9" fill="#eef0ee" stroke="#9a9c98" stroke-width="0.8"/><path d="M5.7 4.5 A4.9 4.9 0 0 1 10.4 10.5 A4.9 4.9 0 0 1 5.7 4.5 Z" fill="#4f86cc" stroke="#2a568f" stroke-width="0.7"/><circle cx="5.6" cy="9.4" r="4.9" fill="none" stroke="#9a9c98" stroke-width="0.6"/></svg>
<span class="t " style="left:88.2px;top:177.4px;font-size:15px;line-height:21px;color:#000;letter-spacing:-0.042px;">Common018</span>
<svg style="left:28.6px;top:205.2px" width="5" height="8" viewBox="0 0 5 8"><path d="M0.2 0.2 L4.8 3.9 L0.2 7.6 Z" fill="#5a5a5a"/></svg>
<svg style="left:45.5px;top:204.6px" width="13.2" height="9.2" viewBox="0 0 13.2 9.2"><path d="M0.6 4.6 C2.4 1.4 5 0.6 6.6 0.6 C8.2 0.6 10.8 1.4 12.6 4.6 C10.8 7.8 8.2 8.6 6.6 8.6 C5 8.6 2.4 7.8 0.6 4.6 Z" fill="#fff" stroke="#000" stroke-width="1.2"/><path d="M4.6 4.4 H6 V3.4 H8.2 V6.2 H4.6 Z" fill="#000"/></svg>
<svg style="left:65.5px;top:201.7px" width="16" height="15" viewBox="0 0 16 15"><circle cx="5.6" cy="9.4" r="4.9" fill="#eef0ee" stroke="#9a9c98" stroke-width="0.8"/><circle cx="10.4" cy="5.6" r="4.9" fill="#eef0ee" stroke="#9a9c98" stroke-width="0.8"/><path d="M5.7 4.5 A4.9 4.9 0 0 1 10.4 10.5 A4.9 4.9 0 0 1 5.7 4.5 Z" fill="#4f86cc" stroke="#2a568f" stroke-width="0.7"/><circle cx="5.6" cy="9.4" r="4.9" fill="none" stroke="#9a9c98" stroke-width="0.6"/></svg>
<span class="t " style="left:88.2px;top:199.4px;font-size:15px;line-height:21px;color:#000;letter-spacing:-0.042px;">Common019</span>
<svg style="left:28.6px;top:227.2px" width="5" height="8" viewBox="0 0 5 8"><path d="M0.2 0.2 L4.8 3.9 L0.2 7.6 Z" fill="#5a5a5a"/></svg>
<svg style="left:45.5px;top:226.6px" width="13.2" height="9.2" viewBox="0 0 13.2 9.2"><path d="M0.6 4.6 C2.4 1.4 5 0.6 6.6 0.6 C8.2 0.6 10.8 1.4 12.6 4.6 C10.8 7.8 8.2 8.6 6.6 8.6 C5 8.6 2.4 7.8 0.6 4.6 Z" fill="#fff" stroke="#000" stroke-width="1.2"/><path d="M4.6 4.4 H6 V3.4 H8.2 V6.2 H4.6 Z" fill="#000"/></svg>
<svg style="left:65.5px;top:223.7px" width="16" height="15" viewBox="0 0 16 15"><circle cx="5.6" cy="9.4" r="4.9" fill="#eef0ee" stroke="#9a9c98" stroke-width="0.8"/><circle cx="10.4" cy="5.6" r="4.9" fill="#eef0ee" stroke="#9a9c98" stroke-width="0.8"/><path d="M5.7 4.5 A4.9 4.9 0 0 1 10.4 10.5 A4.9 4.9 0 0 1 5.7 4.5 Z" fill="#4f86cc" stroke="#2a568f" stroke-width="0.7"/><circle cx="5.6" cy="9.4" r="4.9" fill="none" stroke="#9a9c98" stroke-width="0.6"/></svg>
<span class="t " style="left:88.2px;top:221.4px;font-size:15px;line-height:21px;color:#000;letter-spacing:-0.042px;">Common020</span>
<svg style="left:28.6px;top:249.2px" width="5" height="8" viewBox="0 0 5 8"><path d="M0.2 0.2 L4.8 3.9 L0.2 7.6 Z" fill="#5a5a5a"/></svg>
<svg style="left:45.5px;top:248.6px" width="13.2" height="9.2" viewBox="0 0 13.2 9.2"><path d="M0.6 4.6 C2.4 1.4 5 0.6 6.6 0.6 C8.2 0.6 10.8 1.4 12.6 4.6 C10.8 7.8 8.2 8.6 6.6 8.6 C5 8.6 2.4 7.8 0.6 4.6 Z" fill="#fff" stroke="#000" stroke-width="1.2"/><path d="M4.6 4.4 H6 V3.4 H8.2 V6.2 H4.6 Z" fill="#000"/></svg>
<svg style="left:65.5px;top:245.7px" width="16" height="15" viewBox="0 0 16 15"><circle cx="5.6" cy="9.4" r="4.9" fill="#eef0ee" stroke="#9a9c98" stroke-width="0.8"/><circle cx="10.4" cy="5.6" r="4.9" fill="#eef0ee" stroke="#9a9c98" stroke-width="0.8"/><path d="M5.7 4.5 A4.9 4.9 0 0 1 10.4 10.5 A4.9 4.9 0 0 1 5.7 4.5 Z" fill="#4f86cc" stroke="#2a568f" stroke-width="0.7"/><circle cx="5.6" cy="9.4" r="4.9" fill="none" stroke="#9a9c98" stroke-width="0.6"/></svg>
<span class="t " style="left:88.2px;top:243.4px;font-size:15px;line-height:21px;color:#000;letter-spacing:-0.042px;">Common021</span>
<svg style="left:28.6px;top:271.2px" width="5" height="8" viewBox="0 0 5 8"><path d="M0.2 0.2 L4.8 3.9 L0.2 7.6 Z" fill="#5a5a5a"/></svg>
<svg style="left:45.5px;top:270.6px" width="13.2" height="9.2" viewBox="0 0 13.2 9.2"><path d="M0.6 4.6 C2.4 1.4 5 0.6 6.6 0.6 C8.2 0.6 10.8 1.4 12.6 4.6 C10.8 7.8 8.2 8.6 6.6 8.6 C5 8.6 2.4 7.8 0.6 4.6 Z" fill="#fff" stroke="#000" stroke-width="1.2"/><path d="M4.6 4.4 H6 V3.4 H8.2 V6.2 H4.6 Z" fill="#000"/></svg>
<svg style="left:65.5px;top:267.7px" width="16" height="15" viewBox="0 0 16 15"><circle cx="5.6" cy="9.4" r="4.9" fill="#eef0ee" stroke="#9a9c98" stroke-width="0.8"/><circle cx="10.4" cy="5.6" r="4.9" fill="#eef0ee" stroke="#9a9c98" stroke-width="0.8"/><path d="M5.7 4.5 A4.9 4.9 0 0 1 10.4 10.5 A4.9 4.9 0 0 1 5.7 4.5 Z" fill="#4f86cc" stroke="#2a568f" stroke-width="0.7"/><circle cx="5.6" cy="9.4" r="4.9" fill="none" stroke="#9a9c98" stroke-width="0.6"/></svg>
<span class="t " style="left:88.2px;top:265.4px;font-size:15px;line-height:21px;color:#000;letter-spacing:-0.042px;">Common022</span>
<svg style="left:28.6px;top:293.2px" width="5" height="8" viewBox="0 0 5 8"><path d="M0.2 0.2 L4.8 3.9 L0.2 7.6 Z" fill="#5a5a5a"/></svg>
<svg style="left:45.5px;top:292.6px" width="13.2" height="9.2" viewBox="0 0 13.2 9.2"><path d="M0.6 4.6 C2.4 1.4 5 0.6 6.6 0.6 C8.2 0.6 10.8 1.4 12.6 4.6 C10.8 7.8 8.2 8.6 6.6 8.6 C5 8.6 2.4 7.8 0.6 4.6 Z" fill="#fff" stroke="#000" stroke-width="1.2"/><path d="M4.6 4.4 H6 V3.4 H8.2 V6.2 H4.6 Z" fill="#000"/></svg>
<svg style="left:65.5px;top:289.7px" width="16" height="15" viewBox="0 0 16 15"><circle cx="5.6" cy="9.4" r="4.9" fill="#eef0ee" stroke="#9a9c98" stroke-width="0.8"/><circle cx="10.4" cy="5.6" r="4.9" fill="#eef0ee" stroke="#9a9c98" stroke-width="0.8"/><path d="M5.7 4.5 A4.9 4.9 0 0 1 10.4 10.5 A4.9 4.9 0 0 1 5.7 4.5 Z" fill="#4f86cc" stroke="#2a568f" stroke-width="0.7"/><circle cx="5.6" cy="9.4" r="4.9" fill="none" stroke="#9a9c98" stroke-width="0.6"/></svg>
<span class="t " style="left:88.2px;top:287.4px;font-size:15px;line-height:21px;color:#000;letter-spacing:-0.042px;">Common023</span>
<svg style="left:28.6px;top:315.2px" width="5" height="8" viewBox="0 0 5 8"><path d="M0.2 0.2 L4.8 3.9 L0.2 7.6 Z" fill="#5a5a5a"/></svg>
<svg style="left:45.5px;top:314.6px" width="13.2" height="9.2" viewBox="0 0 13.2 9.2"><path d="M0.6 4.6 C2.4 1.4 5 0.6 6.6 0.6 C8.2 0.6 10.8 1.4 12.6 4.6 C10.8 7.8 8.2 8.6 6.6 8.6 C5 8.6 2.4 7.8 0.6 4.6 Z" fill="#fff" stroke="#000" stroke-width="1.2"/><path d="M4.6 4.4 H6 V3.4 H8.2 V6.2 H4.6 Z" fill="#000"/></svg>
<svg style="left:65.5px;top:311.7px" width="16" height="15" viewBox="0 0 16 15"><circle cx="5.6" cy="9.4" r="4.9" fill="#eef0ee" stroke="#9a9c98" stroke-width="0.8"/><circle cx="10.4" cy="5.6" r="4.9" fill="#eef0ee" stroke="#9a9c98" stroke-width="0.8"/><path d="M5.7 4.5 A4.9 4.9 0 0 1 10.4 10.5 A4.9 4.9 0 0 1 5.7 4.5 Z" fill="#4f86cc" stroke="#2a568f" stroke-width="0.7"/><circle cx="5.6" cy="9.4" r="4.9" fill="none" stroke="#9a9c98" stroke-width="0.6"/></svg>
<span class="t " style="left:88.2px;top:309.4px;font-size:15px;line-height:21px;color:#000;letter-spacing:-0.042px;">Common024</span>
<svg style="left:28.6px;top:337.2px" width="5" height="8" viewBox="0 0 5 8"><path d="M0.2 0.2 L4.8 3.9 L0.2 7.6 Z" fill="#5a5a5a"/></svg>
<svg style="left:45.5px;top:336.6px" width="13.2" height="9.2" viewBox="0 0 13.2 9.2"><path d="M0.6 4.6 C2.4 1.4 5 0.6 6.6 0.6 C8.2 0.6 10.8 1.4 12.6 4.6 C10.8 7.8 8.2 8.6 6.6 8.6 C5 8.6 2.4 7.8 0.6 4.6 Z" fill="#fff" stroke="#000" stroke-width="1.2"/><path d="M4.6 4.4 H6 V3.4 H8.2 V6.2 H4.6 Z" fill="#000"/></svg>
<svg style="left:65.5px;top:333.7px" width="16" height="15" viewBox="0 0 16 15"><circle cx="5.6" cy="9.4" r="4.9" fill="#eef0ee" stroke="#9a9c98" stroke-width="0.8"/><circle cx="10.4" cy="5.6" r="4.9" fill="#eef0ee" stroke="#9a9c98" stroke-width="0.8"/><path d="M5.7 4.5 A4.9 4.9 0 0 1 10.4 10.5 A4.9 4.9 0 0 1 5.7 4.5 Z" fill="#4f86cc" stroke="#2a568f" stroke-width="0.7"/><circle cx="5.6" cy="9.4" r="4.9" fill="none" stroke="#9a9c98" stroke-width="0.6"/></svg>
<span class="t " style="left:88.2px;top:331.4px;font-size:15px;line-height:21px;color:#000;letter-spacing:-0.042px;">Common025</span>
<svg style="left:28.6px;top:359.2px" width="5" height="8" viewBox="0 0 5 8"><path d="M0.2 0.2 L4.8 3.9 L0.2 7.6 Z" fill="#5a5a5a"/></svg>
<svg style="left:45.5px;top:358.6px" width="13.2" height="9.2" viewBox="0 0 13.2 9.2"><path d="M0.6 4.6 C2.4 1.4 5 0.6 6.6 0.6 C8.2 0.6 10.8 1.4 12.6 4.6 C10.8 7.8 8.2 8.6 6.6 8.6 C5 8.6 2.4 7.8 0.6 4.6 Z" fill="none" stroke="#8a8a8a" stroke-width="0.9"/><circle cx="6.6" cy="4.6" r="1.8" fill="none" stroke="#8a8a8a" stroke-width="0.9"/><path d="M2 0 L11.4 9.2" stroke="#7a7a7a" stroke-width="1"/></svg>
<svg style="left:66px;top:356.2px" width="15" height="15" viewBox="0 0 15 15"><path d="M1 9 L7 7.4 L13.6 9 V12.6 L7 14.6 L1 12.6 Z" fill="#9a9c9c" stroke="#6e7070" stroke-width="0.7"/><path d="M7 0.8 L11.6 5.2 H9.2 V9.4 H4.8 V5.2 H2.4 Z" fill="#a8aaaa" stroke="#6e7070" stroke-width="0.7"/></svg>
<span class="t " style="left:88.2px;top:353.4px;font-size:15px;line-height:21px;color:#9090a0;letter-spacing:-0.094px;">LongeronSupD...</span>
<div class="a" style="left:201px;top:176px;width:14px;height:197px;background:#dedede;border-left:1px solid #b8b8b8"></div>
<div class="a" style="left:202px;top:176px;width:13px;height:13px;background:linear-gradient(#fff,#f2f2f2);border-bottom:1px solid #c0c0c0"></div>
<div class="a" style="left:202px;top:359px;width:13px;height:14px;background:linear-gradient(#fff,#f2f2f2);border-top:1px solid #c0c0c0"></div>
<div class="a" style="left:202px;top:299px;width:13px;height:31px;background:linear-gradient(90deg,#fdfdfd,#f4f4f4);border-top:1px solid #c0c0c0;border-bottom:1px solid #c0c0c0"></div>
<div class="a" style="left:204.5px;top:180.5px;width:0;height:0;border-left:3.8px solid transparent;border-right:3.8px solid transparent;border-bottom:4px solid #555"></div>
<div class="a" style="left:204.5px;top:364px;width:0;height:0;border-left:3.8px solid transparent;border-right:3.8px solid transparent;border-top:4px solid #555"></div>
<div class="a" style="left:101px;top:375px;width:16px;height:1px;background-image:linear-gradient(90deg,#b0b0b0 1px,transparent 1px);background-size:3px 1px"></div>
<div class="a" style="left:0;top:378px;width:215px;height:88px;background:#fff;border:1px solid #a8a8a8"></div>
<div class="a" style="left:2px;top:380px;width:211px;height:84px;background:#fff;border:1px solid #b8b8b8"></div>
<div class="a" style="left:0;top:468px;width:41px;height:19px;background:#f0f0f0;border:1px solid #c4c4c4;border-top:none;border-radius:0 0 4px 4px"></div>
<div class="a" style="left:42px;top:467px;width:64px;height:23px;background:#fff;border:1px solid #c4c4c4;border-top:none;border-radius:0 0 4px 4px"></div>
<span class="t " style="left:11.5px;top:471.8px;font-size:12px;line-height:17px;color:#000;letter-spacing:-0.969px;">Vue</span>
<span class="t " style="left:53.5px;top:472.9px;font-size:12px;line-height:17px;color:#000;letter-spacing:-0.934px;">Données</span>
<div class="a" style="left:101px;top:494px;width:16px;height:1px;background-image:linear-gradient(90deg,#b0b0b0 1px,transparent 1px);background-size:3px 1px"></div>
<span class="t " style="left:67.3px;top:497.5px;font-size:12px;line-height:17px;color:#000;letter-spacing:-0.892px;">Tâches</span>
<svg style="left:165px;top:501px" width="50" height="10" viewBox="0 0 50 10"><g fill="none" stroke="#808080" stroke-width="1"><rect x="1.5" y="0.5" width="8" height="8"/><path d="M1.5 3 H9.5"/><rect x="20.5" y="2.5" width="6" height="6"/><path d="M22.5 2.5 V0.5 H28.5 V6.5 H26.5"/></g><path d="M39.4 0.4 L47.6 8.6 M47.6 0.4 L39.4 8.6" stroke="#666" stroke-width="1.4" fill="none"/></svg>
<div class="a" style="left:0;top:513px;width:214px;height:177px;border:1px solid #b6b6b6;border-right-color:#f6f6f4;border-bottom-color:#f6f6f4;background:linear-gradient(#ababc5 0,#333366 54px,#333366 100%)"></div>
<div class="a" style="left:218px;top:417px;width:1px;height:16px;background-image:linear-gradient(#b0b0b0 1px,transparent 1px);background-size:1px 3px"></div>
<div class="a" style="left:222px;top:159px;width:1144px;height:501px;background:#f8f8f8"></div>
<svg style="left:0;top:0" width="1366" height="768" viewBox="0 0 1366 768">
<defs><linearGradient id="skin" x1="0" y1="0" x2="0" y2="1"><stop offset="0" stop-color="#a6a8aa"/><stop offset="1" stop-color="#b4b5b7"/></linearGradient>
<linearGradient id="ribd" x1="0" y1="0" x2="0" y2="1"><stop offset="0" stop-color="#7b8086"/><stop offset="1" stop-color="#82868b"/></linearGradient>
<linearGradient id="ribl" x1="0" y1="0" x2="0" y2="1"><stop offset="0" stop-color="#999b9e"/><stop offset="1" stop-color="#acaeb0"/></linearGradient>
<linearGradient id="pin" x1="0" y1="0" x2="0" y2="1"><stop offset="0" stop-color="#4e5258"/><stop offset="0.12" stop-color="#7e8186"/><stop offset="0.3" stop-color="#9c9ea2"/><stop offset="0.6" stop-color="#7c8085"/><stop offset="1" stop-color="#5e6267"/></linearGradient></defs>
<path d="M316.3 436.1 L316.2 435.7 L315.9 434.4 L315.7 432.7 L316.0 430.8 L316.5 428.7 L317.5 426.5 L318.7 423.8 L320.2 420.9 L322.0 417.8 L324.0 414.4 L326.3 410.6 L329.1 406.8 L332.4 402.9 L335.9 398.7 L339.7 394.2 L343.9 389.6 L348.5 384.9 L353.5 379.9 L358.7 374.6 L364.2 369.1 L370.5 363.8 L377.2 358.4 L384.2 352.7 L391.7 347.1 L399.8 341.5 L408.2 335.6 L417.2 329.9 L426.7 324.0 L436.6 318.1 L447.2 312.3 L458.2 306.4 L469.7 300.5 L481.7 294.5 L508 303.4 L533.7 311.8 L559.3 321.3 L1265.4 407.2 L1214.4 454.0 L1177.1 453.3 L1139.8 452.6 L1102.5 452.0 L1065.2 451.3 L1027.9 450.7 L990.6 450.0 L953.4 449.3 L916.1 448.6 L878.8 448.0 L841.6 447.3 L804.4 446.6 L767.1 445.9 L729.9 445.3 L691.7 444.6 L654.4 443.9 L617.2 443.3 L580.0 442.6 L542.8 442.0 L505.6 441.3 L468.4 440.6 L431.2 440.0 L394.0 439.3 L357.5 440.0 L319.6 442.9 Z" fill="url(#skin)"/>
<path d="M481.7 294.5 L472.2 303.4 L463.0 312.0 L454.1 320.4 L445.5 328.4 L437.1 336.2 L429.1 343.7 L421.3 351.0 L413.7 358.1 L406.1 365.1 L398.8 371.8 L391.7 378.3 L384.9 384.6 L378.3 390.6 L372.1 396.3 L366.1 401.8 L360.8 406.7 L355.7 411.3 L351.0 415.6 L346.6 419.6 L342.5 423.4 L338.7 426.9 L335.2 430.1 L332.0 433.0 L329.1 435.6 L326.5 438.0 L324.2 440.1 L322.3 441.9 L320.6 443.1 L319.1 443.2 L318.0 442.3 L317.1 440.7 L316.6 438.6 L316.3 436.1 L316.2 435.7 L315.9 434.4 L315.7 432.7 L316.0 430.8 L316.5 428.7 L317.5 426.5 L318.7 423.8 L320.2 420.9 L322.0 417.8 L324.0 414.4 L326.3 410.6 L329.1 406.8 L332.4 402.9 L335.9 398.7 L339.7 394.2 L343.9 389.6 L348.5 384.9 L353.5 379.9 L358.7 374.6 L364.2 369.1 L370.5 363.8 L377.2 358.4 L384.2 352.7 L391.7 347.1 L399.8 341.5 L408.2 335.6 L417.2 329.9 L426.7 324.0 L436.6 318.1 L447.2 312.3 L458.2 306.4 L469.7 300.5 L481.7 294.5 Z" fill="url(#ribd)" stroke="#1a1a1a" stroke-width="1.45" stroke-linejoin="round"/>
<path d="M508.0 303.4 L499.4 312.0 L491.1 320.3 L483.0 328.2 L475.1 335.9 L467.4 343.3 L460.0 350.3 L452.8 357.1 L445.7 363.7 L438.8 370.1 L432.0 376.3 L425.5 382.2 L419.2 387.9 L413.1 393.3 L407.3 398.5 L401.8 403.4 L396.8 407.8 L392.0 411.9 L387.6 415.8 L383.4 419.4 L379.5 422.7 L375.9 425.8 L372.5 428.7 L369.5 431.3 L366.7 433.6 L364.2 435.7 L362.1 437.5 L360.2 439.1 L358.5 440.2 L357.0 440.3 L355.8 439.6 L354.8 438.4 L354.0 436.6 L353.5 434.5 L353.4 434.1 L353.1 432.9 L353.0 431.3 L353.3 429.6 L353.8 427.7 L354.7 425.6 L355.8 423.1 L357.2 420.5 L358.9 417.6 L360.9 414.4 L363.0 410.9 L365.6 407.4 L368.7 403.8 L372.0 399.9 L375.5 395.8 L379.4 391.4 L383.8 387.1 L388.4 382.5 L393.3 377.6 L398.5 372.5 L404.4 367.6 L410.6 362.6 L417.1 357.3 L424.2 352.1 L431.7 346.9 L439.5 341.5 L447.9 336.1 L456.7 330.7 L466.0 325.3 L475.9 319.9 L486.1 314.4 L496.8 308.9 L508.0 303.4 Z" fill="url(#ribd)" stroke="#1a1a1a" stroke-width="1.45" stroke-linejoin="round"/>
<path d="M533.7 311.8 L526.0 320.1 L518.5 328.1 L511.1 335.8 L503.9 343.1 L496.9 350.1 L490.1 356.8 L483.4 363.2 L476.9 369.4 L470.5 375.4 L464.2 381.2 L458.1 386.7 L452.2 391.9 L446.6 396.9 L441.1 401.6 L436.0 406.1 L431.2 410.1 L426.7 413.9 L422.5 417.4 L418.5 420.7 L414.8 423.7 L411.4 426.5 L408.2 429.0 L405.3 431.3 L402.7 433.4 L400.3 435.3 L398.2 437.0 L396.4 438.4 L394.8 439.4 L393.5 439.6 L392.4 439.2 L391.6 438.2 L391.0 436.9 L390.7 435.3 L390.6 434.9 L390.4 433.8 L390.2 432.4 L390.5 430.8 L391.0 428.9 L391.8 427.0 L392.8 424.7 L394.1 422.2 L395.7 419.6 L397.5 416.6 L399.4 413.3 L401.9 410.0 L404.7 406.6 L407.8 403.0 L411.0 399.1 L414.6 395.1 L418.7 391.0 L423.0 386.6 L427.5 382.0 L432.2 377.2 L437.7 372.7 L443.5 367.9 L449.5 362.9 L456.0 358.1 L463.0 353.1 L470.2 348.0 L478.0 342.9 L486.2 337.8 L494.8 332.6 L503.9 327.5 L513.4 322.3 L523.3 317.1 L533.7 311.8 Z" fill="url(#ribd)" stroke="#1a1a1a" stroke-width="1.45" stroke-linejoin="round"/>
<path d="M559.3 321.3 L552.5 329.3 L545.8 337.0 L539.2 344.3 L532.8 351.3 L526.5 358.0 L520.3 364.3 L514.3 370.4 L508.4 376.2 L502.5 381.8 L496.7 387.1 L491.2 392.2 L485.7 397.1 L480.5 401.7 L475.5 406.0 L470.6 410.1 L466.2 413.8 L462.1 417.2 L458.1 420.4 L454.4 423.4 L450.9 426.1 L447.7 428.6 L444.7 430.9 L441.9 433.0 L439.4 434.9 L437.2 436.6 L435.2 438.0 L433.5 439.3 L432.0 440.2 L430.7 440.3 L429.7 439.8 L428.8 438.9 L428.3 437.6 L427.9 436.0 L427.9 435.6 L427.6 434.6 L427.5 433.3 L427.7 431.9 L428.2 430.1 L429.0 428.4 L429.9 426.3 L431.1 424.0 L432.5 421.5 L434.1 418.7 L435.9 415.7 L438.2 412.7 L440.8 409.5 L443.6 406.2 L446.6 402.6 L449.9 398.8 L453.6 395.0 L457.6 391.0 L461.7 386.8 L466.1 382.3 L471.1 378.0 L476.4 373.6 L481.9 369.0 L488.0 364.5 L494.3 359.9 L501.0 355.1 L508.2 350.4 L515.7 345.6 L523.6 340.8 L532.0 336.0 L540.7 331.1 L549.8 326.2 L559.3 321.3 Z" fill="url(#ribd)" stroke="#1a1a1a" stroke-width="1.45" stroke-linejoin="round"/>
<path d="M592.1 325.3 L585.6 333.1 L579.1 340.6 L572.8 347.7 L566.6 354.5 L560.5 360.9 L554.5 367.1 L548.7 372.9 L543.0 378.6 L537.3 384.1 L531.7 389.3 L526.3 394.2 L521.1 398.9 L516.0 403.4 L511.1 407.7 L506.5 411.6 L502.2 415.2 L498.2 418.5 L494.4 421.6 L490.8 424.5 L487.4 427.2 L484.3 429.6 L481.4 431.9 L478.7 433.9 L476.3 435.7 L474.2 437.3 L472.3 438.8 L470.6 440.0 L469.2 440.8 L467.9 440.9 L466.9 440.5 L466.1 439.5 L465.5 438.2 L465.2 436.7 L465.1 436.3 L464.9 435.4 L464.8 434.1 L465.0 432.7 L465.4 431.0 L466.2 429.3 L467.1 427.3 L468.2 425.1 L469.6 422.7 L471.2 420.0 L472.9 417.1 L475.1 414.1 L477.6 411.1 L480.3 407.9 L483.3 404.4 L486.5 400.7 L490.0 397.0 L493.8 393.1 L497.9 389.0 L502.1 384.7 L506.9 380.6 L512.1 376.3 L517.4 371.8 L523.2 367.4 L529.4 362.9 L535.8 358.2 L542.7 353.7 L550.0 349.0 L557.6 344.3 L565.7 339.6 L574.1 334.9 L582.9 330.1 L592.1 325.3 Z" fill="url(#ribd)" stroke="#1a1a1a" stroke-width="1.45" stroke-linejoin="round"/>
<path d="M625.0 329.3 L618.7 336.9 L612.5 344.1 L606.4 351.0 L600.4 357.6 L594.5 363.9 L588.8 369.8 L583.2 375.5 L577.6 381.0 L572.1 386.3 L566.7 391.4 L561.5 396.2 L556.5 400.8 L551.6 405.1 L546.9 409.3 L542.4 413.1 L538.2 416.6 L534.3 419.8 L530.7 422.9 L527.2 425.7 L523.9 428.2 L520.9 430.6 L518.1 432.8 L515.6 434.8 L513.2 436.5 L511.1 438.1 L509.3 439.5 L507.7 440.7 L506.3 441.5 L505.1 441.6 L504.1 441.1 L503.3 440.2 L502.7 438.9 L502.4 437.3 L502.4 437.0 L502.1 436.1 L502.0 434.8 L502.3 433.5 L502.7 431.9 L503.4 430.3 L504.3 428.3 L505.4 426.2 L506.7 423.9 L508.3 421.3 L510.0 418.4 L512.1 415.6 L514.5 412.7 L517.1 409.5 L519.9 406.1 L523.0 402.6 L526.5 399.0 L530.2 395.3 L534.0 391.3 L538.1 387.1 L542.8 383.1 L547.7 378.9 L552.9 374.6 L558.5 370.3 L564.5 365.9 L570.7 361.4 L577.4 356.9 L584.4 352.4 L591.7 347.8 L599.5 343.3 L607.7 338.7 L616.2 334.0 L625.0 329.3 Z" fill="url(#ribl)" stroke="#1a1a1a" stroke-width="1.45" stroke-linejoin="round"/>
<path d="M658.0 333.3 L651.9 340.6 L645.9 347.7 L640.0 354.4 L634.2 360.7 L628.6 366.8 L623.0 372.6 L617.7 378.1 L612.3 383.5 L607.0 388.6 L601.8 393.5 L596.8 398.2 L591.9 402.7 L587.2 406.9 L582.6 410.9 L578.3 414.6 L574.3 418.0 L570.5 421.1 L567.0 424.1 L563.6 426.8 L560.5 429.3 L557.6 431.6 L554.9 433.7 L552.4 435.6 L550.2 437.3 L548.1 438.9 L546.4 440.2 L544.8 441.4 L543.5 442.2 L542.3 442.3 L541.3 441.8 L540.5 440.8 L540.0 439.5 L539.7 438.0 L539.6 437.7 L539.4 436.8 L539.3 435.6 L539.5 434.3 L539.9 432.8 L540.6 431.2 L541.5 429.3 L542.5 427.3 L543.9 425.0 L545.4 422.5 L547.0 419.8 L549.0 417.0 L551.4 414.2 L553.9 411.2 L556.6 407.9 L559.6 404.5 L563.0 401.0 L566.5 397.4 L570.2 393.5 L574.2 389.4 L578.7 385.6 L583.5 381.5 L588.5 377.3 L593.9 373.2 L599.6 368.9 L605.6 364.5 L612.1 360.2 L618.8 355.8 L625.9 351.3 L633.4 346.9 L641.3 342.4 L649.5 337.9 L658.0 333.3 Z" fill="url(#ribl)" stroke="#1a1a1a" stroke-width="1.45" stroke-linejoin="round"/>
<path d="M691.1 337.3 L685.2 344.4 L679.4 351.2 L673.7 357.7 L668.2 363.9 L662.7 369.8 L657.4 375.4 L652.2 380.7 L647.0 385.9 L641.9 390.9 L636.9 395.7 L632.1 400.2 L627.3 404.5 L622.8 408.6 L618.4 412.5 L614.2 416.1 L610.4 419.4 L606.7 422.5 L603.3 425.3 L600.1 427.9 L597.0 430.4 L594.2 432.6 L591.6 434.6 L589.2 436.5 L587.1 438.2 L585.1 439.7 L583.4 441.0 L581.9 442.1 L580.6 442.9 L579.5 442.9 L578.6 442.4 L577.8 441.5 L577.3 440.2 L576.9 438.7 L576.9 438.4 L576.7 437.6 L576.6 436.4 L576.8 435.2 L577.2 433.7 L577.9 432.2 L578.7 430.3 L579.7 428.3 L581.0 426.2 L582.5 423.8 L584.0 421.1 L586.0 418.5 L588.3 415.8 L590.7 412.8 L593.3 409.7 L596.2 406.4 L599.4 403.0 L602.9 399.5 L606.5 395.8 L610.3 391.8 L614.6 388.1 L619.2 384.2 L624.1 380.1 L629.3 376.0 L634.8 371.9 L640.6 367.7 L646.8 363.5 L653.3 359.2 L660.1 354.9 L667.4 350.6 L674.9 346.2 L682.8 341.8 L691.1 337.3 Z" fill="url(#ribl)" stroke="#1a1a1a" stroke-width="1.45" stroke-linejoin="round"/>
<path d="M724.2 341.4 L718.6 348.2 L713.0 354.8 L707.5 361.1 L702.2 367.1 L696.9 372.8 L691.8 378.2 L686.8 383.4 L681.8 388.3 L676.9 393.2 L672.1 397.8 L667.4 402.2 L662.8 406.4 L658.4 410.4 L654.2 414.1 L650.1 417.7 L646.5 420.8 L643.0 423.8 L639.7 426.5 L636.5 429.1 L633.6 431.4 L630.9 433.6 L628.4 435.6 L626.1 437.4 L624.0 439.0 L622.2 440.4 L620.5 441.7 L619.1 442.8 L617.8 443.5 L616.7 443.6 L615.8 443.1 L615.1 442.1 L614.5 440.9 L614.2 439.4 L614.2 439.1 L614.0 438.3 L613.9 437.2 L614.1 436.0 L614.5 434.6 L615.1 433.1 L615.9 431.3 L616.9 429.4 L618.2 427.4 L619.6 425.0 L621.1 422.5 L623.0 419.9 L625.2 417.3 L627.5 414.5 L630.1 411.4 L632.8 408.2 L636.0 405.0 L639.3 401.6 L642.7 398.0 L646.4 394.2 L650.6 390.5 L655.0 386.8 L659.7 382.8 L664.7 378.9 L670.0 374.9 L675.6 370.8 L681.6 366.7 L687.8 362.6 L694.4 358.4 L701.4 354.2 L708.7 350.0 L716.3 345.7 L724.2 341.4 Z" fill="url(#ribl)" stroke="#1a1a1a" stroke-width="1.45" stroke-linejoin="round"/>
<path d="M757.4 345.4 L752.0 352.0 L746.7 358.4 L741.4 364.5 L736.2 370.2 L731.2 375.7 L726.3 381.0 L721.4 386.0 L716.7 390.8 L711.9 395.5 L707.3 400.0 L702.8 404.2 L698.4 408.3 L694.1 412.1 L690.0 415.7 L686.1 419.2 L682.6 422.2 L679.2 425.1 L676.0 427.7 L673.0 430.2 L670.2 432.5 L667.6 434.6 L665.2 436.5 L663.0 438.3 L661.0 439.8 L659.2 441.2 L657.6 442.4 L656.2 443.5 L655.0 444.2 L653.9 444.2 L653.0 443.7 L652.3 442.8 L651.8 441.5 L651.5 440.1 L651.4 439.8 L651.3 439.0 L651.2 437.9 L651.4 436.8 L651.8 435.5 L652.4 434.0 L653.2 432.3 L654.2 430.5 L655.3 428.5 L656.7 426.3 L658.2 423.8 L660.0 421.4 L662.1 418.8 L664.4 416.1 L666.8 413.1 L669.5 410.1 L672.5 407.0 L675.7 403.7 L679.0 400.2 L682.6 396.5 L686.6 393.0 L690.9 389.4 L695.3 385.6 L700.2 381.8 L705.3 377.9 L710.7 373.9 L716.4 370.0 L722.4 366.0 L728.8 361.9 L735.5 357.9 L742.5 353.8 L749.8 349.6 L757.4 345.4 Z" fill="url(#ribd)" stroke="#1a1a1a" stroke-width="1.45" stroke-linejoin="round"/>
<path d="M790.7 349.4 L785.5 355.9 L780.4 362.0 L775.3 367.8 L770.4 373.4 L765.5 378.7 L760.8 383.8 L756.1 388.6 L751.5 393.3 L747.0 397.8 L742.5 402.1 L738.2 406.2 L733.9 410.1 L729.9 413.9 L725.9 417.4 L722.2 420.7 L718.7 423.7 L715.5 426.4 L712.4 429.0 L709.6 431.4 L706.9 433.6 L704.3 435.6 L702.0 437.4 L699.9 439.1 L698.0 440.6 L696.2 442.0 L694.7 443.2 L693.4 444.2 L692.2 444.9 L691.2 444.9 L690.3 444.4 L689.6 443.4 L689.1 442.2 L688.8 440.7 L688.7 440.5 L688.6 439.7 L688.5 438.7 L688.7 437.6 L689.0 436.3 L689.7 434.9 L690.4 433.3 L691.3 431.5 L692.5 429.6 L693.7 427.4 L695.2 425.0 L696.9 422.7 L698.9 420.2 L701.1 417.6 L703.5 414.7 L706.0 411.8 L708.9 408.8 L712.0 405.6 L715.2 402.2 L718.6 398.7 L722.5 395.3 L726.6 391.8 L730.9 388.1 L735.6 384.5 L740.5 380.8 L745.7 376.9 L751.2 373.1 L757.0 369.2 L763.1 365.3 L769.6 361.5 L776.3 357.5 L783.4 353.5 L790.7 349.4 Z" fill="url(#ribl)" stroke="#1a1a1a" stroke-width="1.45" stroke-linejoin="round"/>
<path d="M824.1 353.5 L819.1 359.7 L814.2 365.6 L809.3 371.2 L804.6 376.6 L799.9 381.7 L795.3 386.6 L790.9 391.3 L786.5 395.8 L782.1 400.1 L777.8 404.3 L773.6 408.3 L769.6 412.0 L765.6 415.6 L761.8 419.0 L758.2 422.2 L754.9 425.1 L751.8 427.7 L748.9 430.2 L746.1 432.5 L743.5 434.6 L741.1 436.6 L738.9 438.4 L736.8 440.0 L734.9 441.5 L733.3 442.8 L731.8 443.9 L730.5 444.9 L729.4 445.6 L728.4 445.5 L727.6 445.0 L726.9 444.1 L726.4 442.9 L726.1 441.4 L726.0 441.2 L725.9 440.4 L725.8 439.4 L726.0 438.4 L726.3 437.1 L726.9 435.8 L727.6 434.2 L728.5 432.5 L729.6 430.6 L730.8 428.6 L732.2 426.3 L733.8 424.0 L735.8 421.6 L737.9 419.1 L740.1 416.3 L742.6 413.5 L745.4 410.6 L748.3 407.5 L751.4 404.3 L754.7 400.9 L758.4 397.6 L762.4 394.2 L766.5 390.7 L771.0 387.2 L775.8 383.6 L780.7 379.9 L786.1 376.3 L791.6 372.5 L797.5 368.8 L803.8 365.0 L810.3 361.2 L817.0 357.4 L824.1 353.5 Z" fill="url(#ribl)" stroke="#1a1a1a" stroke-width="1.45" stroke-linejoin="round"/>
<path d="M857.6 357.6 L852.8 363.5 L848.0 369.2 L843.4 374.6 L838.8 379.8 L834.3 384.7 L830.0 389.4 L825.7 393.9 L821.5 398.2 L817.2 402.4 L813.1 406.5 L809.1 410.3 L805.2 413.9 L801.4 417.4 L797.8 420.7 L794.3 423.8 L791.1 426.5 L788.1 429.1 L785.3 431.5 L782.7 433.7 L780.2 435.7 L777.8 437.6 L775.7 439.3 L773.7 440.9 L771.9 442.3 L770.3 443.5 L768.9 444.6 L767.7 445.6 L766.6 446.2 L765.7 446.2 L764.9 445.7 L764.2 444.8 L763.7 443.5 L763.4 442.1 L763.4 441.9 L763.2 441.2 L763.1 440.2 L763.3 439.2 L763.6 437.9 L764.2 436.7 L764.8 435.1 L765.7 433.5 L766.7 431.7 L767.9 429.7 L769.2 427.5 L770.8 425.3 L772.7 423.0 L774.7 420.6 L776.9 417.9 L779.2 415.2 L781.9 412.4 L784.7 409.5 L787.7 406.3 L790.8 403.1 L794.4 399.9 L798.2 396.7 L802.2 393.3 L806.5 389.9 L811.1 386.5 L815.8 382.9 L821.0 379.4 L826.3 375.8 L832.0 372.2 L838.0 368.6 L844.3 365.0 L850.8 361.3 L857.6 357.6 Z" fill="url(#ribl)" stroke="#1a1a1a" stroke-width="1.45" stroke-linejoin="round"/>
<path d="M891.1 361.7 L886.5 367.4 L882.0 372.8 L877.5 378.0 L873.1 383.0 L868.9 387.8 L864.7 392.3 L860.6 396.6 L856.5 400.7 L852.4 404.8 L848.5 408.6 L844.6 412.3 L840.9 415.8 L837.2 419.2 L833.7 422.3 L830.4 425.3 L827.4 427.9 L824.5 430.4 L821.8 432.7 L819.2 434.8 L816.8 436.8 L814.6 438.6 L812.6 440.3 L810.7 441.8 L809.0 443.1 L807.4 444.3 L806.1 445.4 L804.9 446.3 L803.9 446.9 L802.9 446.9 L802.2 446.3 L801.5 445.4 L801.0 444.2 L800.7 442.8 L800.7 442.6 L800.5 441.9 L800.4 440.9 L800.6 440.0 L800.9 438.8 L801.4 437.5 L802.1 436.1 L802.9 434.5 L803.9 432.8 L805.0 430.8 L806.3 428.7 L807.8 426.6 L809.6 424.4 L811.5 422.1 L813.6 419.5 L815.9 416.9 L818.4 414.2 L821.1 411.4 L824.0 408.4 L827.0 405.2 L830.4 402.2 L834.1 399.1 L837.9 395.9 L842.0 392.6 L846.4 389.3 L851.0 385.9 L856.0 382.6 L861.1 379.1 L866.5 375.7 L872.3 372.2 L878.3 368.7 L884.6 365.2 L891.1 361.7 Z" fill="url(#ribl)" stroke="#1a1a1a" stroke-width="1.45" stroke-linejoin="round"/>
<path d="M924.8 365.7 L920.3 371.2 L916.0 376.5 L911.7 381.5 L907.5 386.2 L903.4 390.8 L899.4 395.1 L895.5 399.2 L891.6 403.2 L887.7 407.1 L883.9 410.8 L880.2 414.4 L876.6 417.7 L873.1 420.9 L869.8 424.0 L866.5 426.8 L863.6 429.4 L860.9 431.7 L858.3 433.9 L855.8 436.0 L853.5 437.9 L851.4 439.6 L849.4 441.2 L847.6 442.7 L846.0 444.0 L844.5 445.1 L843.2 446.1 L842.1 447.0 L841.1 447.6 L840.2 447.5 L839.5 447.0 L838.8 446.1 L838.4 444.9 L838.1 443.5 L838.0 443.2 L837.9 442.6 L837.8 441.7 L837.9 440.7 L838.2 439.6 L838.7 438.4 L839.3 437.0 L840.1 435.5 L841.1 433.8 L842.1 432.0 L843.3 429.9 L844.8 427.9 L846.5 425.8 L848.4 423.5 L850.4 421.1 L852.5 418.6 L855.0 416.0 L857.6 413.3 L860.3 410.5 L863.2 407.4 L866.5 404.6 L870.0 401.6 L873.7 398.4 L877.6 395.3 L881.9 392.2 L886.2 388.9 L891.0 385.7 L895.9 382.4 L901.2 379.1 L906.7 375.9 L912.5 372.5 L918.5 369.1 L924.8 365.7 Z" fill="url(#ribl)" stroke="#1a1a1a" stroke-width="1.45" stroke-linejoin="round"/>
<path d="M958.5 369.8 L954.2 375.1 L950.1 380.1 L946.0 384.9 L942.0 389.5 L938.0 393.8 L934.2 398.0 L930.5 401.9 L926.7 405.7 L923.0 409.5 L919.3 413.0 L915.8 416.4 L912.4 419.7 L909.0 422.7 L905.8 425.6 L902.7 428.4 L899.9 430.8 L897.3 433.1 L894.8 435.2 L892.5 437.2 L890.3 439.0 L888.2 440.6 L886.3 442.2 L884.6 443.5 L883.0 444.8 L881.6 445.9 L880.4 446.9 L879.3 447.7 L878.3 448.3 L877.5 448.2 L876.8 447.6 L876.2 446.7 L875.7 445.5 L875.4 444.1 L875.4 443.9 L875.2 443.3 L875.1 442.4 L875.3 441.5 L875.5 440.4 L876.0 439.3 L876.6 437.9 L877.4 436.5 L878.3 434.9 L879.3 433.1 L880.4 431.2 L881.8 429.2 L883.5 427.2 L885.3 425.0 L887.2 422.7 L889.2 420.3 L891.6 417.9 L894.1 415.3 L896.7 412.5 L899.5 409.6 L902.6 406.9 L906.0 404.0 L909.5 401.0 L913.3 398.1 L917.3 395.1 L921.5 391.9 L926.1 388.9 L930.8 385.7 L935.8 382.6 L941.1 379.5 L946.7 376.3 L952.4 373.1 L958.5 369.8 Z" fill="url(#ribl)" stroke="#1a1a1a" stroke-width="1.45" stroke-linejoin="round"/>
<path d="M992.3 373.9 L988.2 379.0 L984.2 383.8 L980.3 388.3 L976.5 392.7 L972.7 396.9 L969.1 400.8 L965.5 404.6 L961.9 408.3 L958.3 411.8 L954.8 415.2 L951.4 418.5 L948.1 421.6 L944.9 424.5 L941.9 427.3 L938.9 429.9 L936.2 432.3 L933.7 434.4 L931.3 436.4 L929.1 438.3 L927.0 440.1 L925.1 441.6 L923.2 443.1 L921.6 444.4 L920.1 445.6 L918.7 446.7 L917.5 447.6 L916.5 448.4 L915.6 448.9 L914.8 448.8 L914.1 448.3 L913.5 447.4 L913.1 446.2 L912.8 444.8 L912.7 444.6 L912.6 444.0 L912.5 443.2 L912.6 442.3 L912.9 441.3 L913.4 440.2 L913.9 438.9 L914.6 437.5 L915.5 436.0 L916.5 434.3 L917.6 432.4 L918.9 430.5 L920.5 428.6 L922.2 426.5 L924.0 424.3 L926.0 422.0 L928.2 419.7 L930.6 417.2 L933.1 414.6 L935.7 411.8 L938.8 409.2 L942.0 406.5 L945.3 403.6 L949.0 400.8 L952.9 397.9 L956.9 395.0 L961.2 392.1 L965.8 389.1 L970.6 386.1 L975.7 383.1 L980.9 380.1 L986.5 377.0 L992.3 373.9 Z" fill="url(#ribl)" stroke="#1a1a1a" stroke-width="1.45" stroke-linejoin="round"/>
<path d="M1026.1 378.1 L1022.3 382.9 L1018.5 387.4 L1014.7 391.8 L1011.1 396.0 L1007.5 399.9 L1004.0 403.7 L1000.6 407.3 L997.1 410.8 L993.7 414.2 L990.4 417.4 L987.1 420.5 L984.0 423.5 L980.9 426.3 L978.0 429.0 L975.1 431.5 L972.6 433.7 L970.2 435.8 L967.9 437.7 L965.8 439.5 L963.8 441.1 L961.9 442.7 L960.2 444.1 L958.6 445.3 L957.2 446.5 L955.9 447.5 L954.7 448.3 L953.7 449.1 L952.9 449.6 L952.1 449.5 L951.4 448.9 L950.8 448.0 L950.4 446.9 L950.1 445.5 L950.1 445.3 L949.9 444.7 L949.9 443.9 L950.0 443.1 L950.2 442.1 L950.7 441.0 L951.2 439.8 L951.9 438.5 L952.7 437.0 L953.7 435.4 L954.7 433.6 L956.0 431.8 L957.5 430.0 L959.1 428.0 L960.8 425.9 L962.7 423.7 L964.9 421.5 L967.2 419.1 L969.6 416.6 L972.1 414.0 L975.0 411.5 L978.0 408.9 L981.3 406.2 L984.7 403.5 L988.4 400.8 L992.3 398.0 L996.4 395.2 L1000.8 392.4 L1005.4 389.6 L1010.2 386.7 L1015.3 383.9 L1020.6 381.0 L1026.1 378.1 Z" fill="url(#ribl)" stroke="#1a1a1a" stroke-width="1.45" stroke-linejoin="round"/>
<path d="M1060.1 382.2 L1056.4 386.7 L1052.8 391.1 L1049.2 395.3 L1045.7 399.2 L1042.3 403.0 L1038.9 406.6 L1035.7 410.0 L1032.4 413.3 L1029.2 416.6 L1026.0 419.7 L1022.9 422.6 L1019.8 425.4 L1016.9 428.1 L1014.1 430.7 L1011.4 433.0 L1009.0 435.2 L1006.7 437.1 L1004.5 439.0 L1002.5 440.7 L1000.5 442.2 L998.8 443.7 L997.1 445.0 L995.6 446.2 L994.2 447.3 L993.0 448.2 L991.9 449.1 L991.0 449.8 L990.1 450.3 L989.4 450.2 L988.7 449.6 L988.2 448.7 L987.8 447.5 L987.5 446.2 L987.5 446.0 L987.3 445.4 L987.3 444.7 L987.4 443.9 L987.6 442.9 L988.0 441.9 L988.5 440.8 L989.2 439.5 L990.0 438.1 L990.9 436.5 L991.9 434.8 L993.1 433.1 L994.5 431.4 L996.1 429.5 L997.7 427.5 L999.5 425.4 L1001.6 423.3 L1003.7 421.1 L1006.0 418.7 L1008.5 416.2 L1011.2 413.8 L1014.2 411.4 L1017.2 408.8 L1020.5 406.3 L1024.1 403.7 L1027.8 401.0 L1031.7 398.4 L1035.9 395.7 L1040.3 393.0 L1044.9 390.4 L1049.7 387.7 L1054.8 384.9 L1060.1 382.2 Z" fill="url(#ribl)" stroke="#1a1a1a" stroke-width="1.45" stroke-linejoin="round"/>
<path d="M1094.1 386.3 L1090.6 390.7 L1087.1 394.8 L1083.7 398.7 L1080.4 402.5 L1077.2 406.1 L1074.0 409.5 L1070.9 412.7 L1067.7 415.9 L1064.6 419.0 L1061.6 421.9 L1058.6 424.7 L1055.8 427.4 L1053.0 429.9 L1050.3 432.3 L1047.7 434.6 L1045.4 436.6 L1043.2 438.5 L1041.1 440.2 L1039.2 441.8 L1037.3 443.3 L1035.6 444.7 L1034.1 446.0 L1032.6 447.1 L1031.3 448.1 L1030.2 449.0 L1029.1 449.8 L1028.2 450.5 L1027.4 451.0 L1026.7 450.8 L1026.1 450.2 L1025.6 449.3 L1025.2 448.2 L1024.9 446.9 L1024.9 446.7 L1024.7 446.1 L1024.7 445.4 L1024.8 444.7 L1025.0 443.7 L1025.4 442.8 L1025.9 441.7 L1026.5 440.5 L1027.2 439.2 L1028.1 437.7 L1029.0 436.1 L1030.2 434.5 L1031.6 432.8 L1033.0 431.0 L1034.6 429.1 L1036.4 427.1 L1038.3 425.1 L1040.4 423.0 L1042.6 420.8 L1044.9 418.4 L1047.5 416.2 L1050.3 413.8 L1053.2 411.4 L1056.4 409.0 L1059.8 406.6 L1063.3 404.1 L1067.1 401.6 L1071.0 399.1 L1075.2 396.5 L1079.6 394.0 L1084.2 391.5 L1089.1 388.9 L1094.1 386.3 Z" fill="url(#ribl)" stroke="#1a1a1a" stroke-width="1.45" stroke-linejoin="round"/>
<path d="M1128.2 390.5 L1124.9 394.6 L1121.6 398.5 L1118.3 402.2 L1115.2 405.8 L1112.1 409.2 L1109.0 412.4 L1106.1 415.4 L1103.1 418.4 L1100.2 421.3 L1097.3 424.1 L1094.4 426.8 L1091.7 429.3 L1089.0 431.7 L1086.5 434.0 L1084.0 436.2 L1081.8 438.1 L1079.7 439.8 L1077.7 441.5 L1075.9 443.0 L1074.2 444.4 L1072.5 445.7 L1071.1 446.9 L1069.7 448.0 L1068.4 449.0 L1067.3 449.8 L1066.3 450.6 L1065.5 451.2 L1064.7 451.6 L1064.0 451.5 L1063.4 450.9 L1062.9 450.0 L1062.6 448.8 L1062.3 447.5 L1062.3 447.4 L1062.1 446.9 L1062.1 446.2 L1062.2 445.4 L1062.4 444.6 L1062.8 443.7 L1063.2 442.6 L1063.8 441.5 L1064.5 440.2 L1065.3 438.8 L1066.2 437.3 L1067.4 435.8 L1068.7 434.2 L1070.1 432.5 L1071.6 430.7 L1073.2 428.9 L1075.1 427.0 L1077.1 425.0 L1079.1 422.8 L1081.3 420.6 L1083.8 418.5 L1086.5 416.3 L1089.3 414.0 L1092.3 411.8 L1095.5 409.5 L1098.9 407.1 L1102.5 404.8 L1106.2 402.4 L1110.2 400.0 L1114.4 397.7 L1118.8 395.3 L1123.4 392.9 L1128.2 390.5 Z" fill="url(#ribl)" stroke="#1a1a1a" stroke-width="1.45" stroke-linejoin="round"/>
<path d="M1162.4 394.6 L1159.2 398.4 L1156.0 402.1 L1152.9 405.5 L1149.8 408.8 L1146.8 412.0 L1143.9 415.0 L1141.1 417.9 L1138.3 420.7 L1135.5 423.4 L1132.7 426.1 L1130.0 428.6 L1127.4 431.0 L1124.9 433.3 L1122.4 435.4 L1120.1 437.5 L1118.0 439.3 L1116.1 441.0 L1114.2 442.6 L1112.5 444.0 L1110.9 445.4 L1109.3 446.6 L1107.9 447.7 L1106.7 448.8 L1105.5 449.7 L1104.4 450.5 L1103.5 451.3 L1102.7 451.9 L1102.0 452.3 L1101.4 452.1 L1100.8 451.5 L1100.3 450.6 L1100.0 449.5 L1099.7 448.2 L1099.7 448.1 L1099.5 447.6 L1099.5 446.9 L1099.6 446.2 L1099.8 445.4 L1100.2 444.6 L1100.6 443.5 L1101.2 442.5 L1101.8 441.3 L1102.6 440.0 L1103.5 438.5 L1104.5 437.1 L1105.8 435.6 L1107.1 434.0 L1108.5 432.3 L1110.1 430.6 L1111.9 428.8 L1113.8 426.9 L1115.7 424.9 L1117.8 422.8 L1120.2 420.8 L1122.8 418.8 L1125.4 416.6 L1128.3 414.5 L1131.3 412.4 L1134.5 410.1 L1137.9 408.0 L1141.5 405.8 L1145.3 403.5 L1149.3 401.4 L1153.5 399.1 L1157.8 396.9 L1162.4 394.6 Z" fill="url(#ribl)" stroke="#1a1a1a" stroke-width="1.45" stroke-linejoin="round"/>
<path d="M1196.7 398.8 L1193.5 402.3 L1190.5 405.6 L1187.5 408.9 L1184.6 411.9 L1181.7 414.9 L1178.9 417.7 L1176.2 420.4 L1173.5 423.0 L1170.9 425.6 L1168.2 428.0 L1165.7 430.4 L1163.2 432.7 L1160.8 434.8 L1158.5 436.9 L1156.3 438.8 L1154.3 440.5 L1152.5 442.1 L1150.8 443.6 L1149.1 445.0 L1147.6 446.3 L1146.2 447.5 L1144.9 448.6 L1143.7 449.6 L1142.6 450.5 L1141.6 451.3 L1140.7 452.0 L1140.0 452.6 L1139.3 452.9 L1138.7 452.8 L1138.2 452.2 L1137.7 451.3 L1137.4 450.2 L1137.1 448.9 L1137.1 448.7 L1137.0 448.3 L1136.9 447.7 L1137.0 447.0 L1137.2 446.2 L1137.6 445.4 L1138.0 444.5 L1138.5 443.4 L1139.2 442.3 L1139.9 441.1 L1140.7 439.8 L1141.7 438.4 L1142.9 437.0 L1144.2 435.5 L1145.5 433.9 L1147.0 432.3 L1148.7 430.6 L1150.5 428.8 L1152.4 427.0 L1154.4 425.0 L1156.6 423.2 L1159.0 421.2 L1161.6 419.2 L1164.3 417.3 L1167.2 415.3 L1170.2 413.2 L1173.5 411.2 L1176.9 409.1 L1180.4 407.1 L1184.3 405.0 L1188.2 403.0 L1192.3 400.9 L1196.7 398.8 Z" fill="url(#ribl)" stroke="#1a1a1a" stroke-width="1.45" stroke-linejoin="round"/>
<path d="M1231.0 403.0 L1228.0 406.2 L1225.0 409.3 L1222.2 412.2 L1219.4 415.1 L1216.7 417.8 L1214.0 420.4 L1211.4 422.9 L1208.9 425.3 L1206.3 427.7 L1203.8 430.0 L1201.4 432.3 L1199.1 434.4 L1196.8 436.4 L1194.6 438.4 L1192.5 440.2 L1190.7 441.8 L1189.0 443.3 L1187.3 444.8 L1185.8 446.1 L1184.4 447.3 L1183.0 448.4 L1181.8 449.5 L1180.7 450.4 L1179.7 451.2 L1178.7 452.0 L1177.9 452.7 L1177.2 453.2 L1176.6 453.6 L1176.1 453.4 L1175.6 452.8 L1175.1 451.9 L1174.8 450.8 L1174.5 449.6 L1174.5 449.4 L1174.4 449.0 L1174.4 448.4 L1174.5 447.8 L1174.6 447.1 L1175.0 446.3 L1175.4 445.4 L1175.9 444.4 L1176.5 443.4 L1177.2 442.3 L1178.0 441.0 L1179.0 439.7 L1180.1 438.4 L1181.3 437.0 L1182.6 435.5 L1184.0 434.0 L1185.6 432.4 L1187.3 430.8 L1189.1 429.0 L1191.0 427.2 L1193.1 425.5 L1195.4 423.7 L1197.8 421.8 L1200.4 420.0 L1203.1 418.2 L1206.0 416.2 L1209.0 414.4 L1212.3 412.5 L1215.7 410.6 L1219.3 408.7 L1223.0 406.8 L1226.9 404.9 L1231.0 403.0 Z" fill="url(#ribl)" stroke="#1a1a1a" stroke-width="1.45" stroke-linejoin="round"/>
<path d="M1265.5 407.2 L1262.5 410.1 L1259.7 412.9 L1257.0 415.6 L1254.3 418.2 L1251.7 420.7 L1249.2 423.1 L1246.7 425.4 L1244.3 427.7 L1241.9 429.9 L1239.5 432.1 L1237.2 434.2 L1235.0 436.2 L1232.9 438.1 L1230.8 439.9 L1228.8 441.6 L1227.1 443.1 L1225.5 444.6 L1223.9 445.9 L1222.5 447.1 L1221.2 448.3 L1219.9 449.4 L1218.8 450.3 L1217.7 451.2 L1216.8 452.0 L1215.9 452.7 L1215.2 453.4 L1214.5 453.9 L1213.9 454.3 L1213.4 454.1 L1212.9 453.5 L1212.5 452.6 L1212.2 451.5 L1212.0 450.3 L1211.9 450.1 L1211.9 449.7 L1211.8 449.1 L1211.9 448.6 L1212.1 447.9 L1212.4 447.2 L1212.8 446.3 L1213.3 445.4 L1213.9 444.5 L1214.5 443.4 L1215.3 442.2 L1216.2 441.0 L1217.3 439.8 L1218.4 438.5 L1219.6 437.1 L1221.0 435.7 L1222.5 434.3 L1224.1 432.7 L1225.8 431.1 L1227.6 429.4 L1229.6 427.8 L1231.8 426.2 L1234.0 424.5 L1236.5 422.8 L1239.1 421.1 L1241.8 419.3 L1244.7 417.6 L1247.7 415.8 L1250.9 414.1 L1254.4 412.4 L1257.9 410.7 L1261.6 408.9 L1265.5 407.2 Z" fill="url(#ribl)" stroke="#1a1a1a" stroke-width="1.45" stroke-linejoin="round"/>
<path d="M464.9 310.6 L527.8 318.4 L560 322.6" fill="none" stroke="#222" stroke-width="1.3"/>
<path d="M481.7 294.5 L508 303.4 L533.7 311.8 L559.3 321.3" fill="none" stroke="#1c1c1c" stroke-width="1.6" stroke-linejoin="round"/>
<path d="M558.6 322.0 L1265 408.0" fill="none" stroke="#1e1e1e" stroke-width="3.5" stroke-linecap="round"/>
<path d="M360.2 382.2 L384.5 384.9 L375.0 394.0 L359.8 391.2 Q357.2 390.6 357.6 386.6 Q357.8 382.4 360.2 382.2 Z" fill="url(#pin)"/>
<path d="M396.6 386.7 L419.6 389.4 L410.1 398.5 L396.2 395.7 Q393.6 395.1 394.0 391.1 Q394.2 386.9 396.6 386.7 Z" fill="url(#pin)"/>
<path d="M433.9 390.7 L454.0 393.4 L444.5 402.5 L433.5 399.7 Q430.9 399.1 431.3 395.1 Q431.5 390.9 433.9 390.7 Z" fill="url(#pin)"/>
<ellipse cx="474.7" cy="399.8" rx="3.6" ry="5.4" fill="none" stroke="#2e3238" stroke-width="1.4" transform="rotate(-6 474.7 399.8)"/>
</svg>
<svg style="left:0;top:0" width="1366" height="768" viewBox="0 0 1366 768"><g transform="translate(1200 155) scale(0.20169)" stroke="#3c3c3c" stroke-width="4" fill="#e3eefa" stroke-linejoin="round">
<polygon points="465,55 407,123 525,123" />
<polygon points="407,642 525,642 465,708" />
<polygon points="140,380 207,323 207,440" />
<polygon points="793,380 727,323 727,440" />
<circle cx="750" cy="97" r="33"/>
<path d="M375 90 C320 105 270 135 240 165 L228 150 L220 225 L292 205 L275 190 C300 165 340 140 385 125 Z"/>
<path d="M557 90 C612 105 662 135 692 165 L704 150 L712 225 L640 205 L657 190 C632 165 592 140 547 125 Z"/>
<polygon points="637,590 690,567 738,582 738,640 688,662 637,642" />
<path d="M637 590 L688 607 L738 582 M688 607 L688 662" fill="none"/>
<polygon points="415,185 535,188 610,235 675,375 665,440 560,550 510,578 400,570 340,545 305,512 255,385 270,300" />
<path d="M270 312 L385 320 L435 295 L545 215 L535 190 M545 215 L580 215 L615 240 M580 215 L470 335 L435 295 M385 320 L380 375 L260 380 M380 375 L420 405 L470 335 M420 405 L475 545 L400 568 M475 545 L530 520 L470 335 M530 520 L560 520 L665 440 M560 520 L560 550 M475 545 L510 578 M610 235 L620 250 L680 385" fill="none" stroke-width="3.2"/>
</g>
<g transform="translate(1200 155) scale(0.20169)" fill="none" stroke-width="6" stroke-linecap="round"><defs><linearGradient id="rx" gradientUnits="userSpaceOnUse" x1="310" y1="610" x2="468" y2="473"><stop offset="0" stop-color="#ff3030"/><stop offset="0.35" stop-color="#ff5050"/><stop offset="1" stop-color="#f0b0b8"/></linearGradient></defs>
<path d="M310 610 L213 403" stroke="#44e83c"/><path d="M310 610 L468 473" stroke="url(#rx)"/><path d="M310 610 L482 618" stroke="#4242f2" stroke-width="7"/></g>
<text x="0" y="0" transform="translate(1316.4 236.3) rotate(-30) skewX(-18)" font-family="Liberation Sans, sans-serif" font-size="12.5" fill="#8a8f96" text-anchor="middle" textLength="29" lengthAdjust="spacingAndGlyphs">HAUT</text>
<text x="0" y="0" transform="translate(1272.5 249.5) rotate(62) skewX(-14)" font-family="Liberation Sans, sans-serif" font-size="8.5" fill="#8a8f96" text-anchor="middle" textLength="36" lengthAdjust="spacingAndGlyphs">GAUCHE</text>
<text x="0" y="0" transform="translate(1282.5 206.5) rotate(-42) skewX(-30)" font-family="Liberation Sans, sans-serif" font-size="6" fill="#8a9098" opacity="0.75" text-anchor="middle" textLength="32" lengthAdjust="spacingAndGlyphs">ARRIÈRE</text>
</svg>
<svg style="left:1320px;top:600px" width="46" height="45" viewBox="0 0 46 45"><g fill="none" stroke-width="1.3"><path d="M21.1 35.1 L14.6 21.4" stroke="#0e8a1e"/><path d="M21.1 35.1 L28.6 27.8" stroke="#8c1212"/><path d="M21.1 35.1 H33.6" stroke="#14148c"/></g>
<path d="M14 20.2 L17.8 23.6 L14.4 25.2 Z" fill="#0e8a1e"/><path d="M29.8 26.8 L28.4 30 L26.2 27.8 Z" fill="#8c1212"/><path d="M35 35.3 L30.2 37 V33.4 Z" fill="#14148c"/>
<g font-family="Liberation Sans, sans-serif" font-size="9.4" font-weight="bold" fill="#000"><text x="13.8" y="17.6">Y</text><text x="30.8" y="25.8">X</text><text x="36.6" y="34.9">Z</text></g></svg>
<div class="a" style="left:222px;top:660px;width:1144px;height:1px;background:#c4c4c4"></div>
<div class="a" style="left:222px;top:660px;width:92px;height:28.5px;background:linear-gradient(#e4e4e4,#dedede);border:1px solid #ababab;border-radius:0 0 3px 3px;box-sizing:border-box"></div>
<div class="a" style="left:470px;top:660px;width:144px;height:28.5px;background:linear-gradient(#e4e4e4,#dedede);border:1px solid #ababab;border-radius:0 0 3px 3px;box-sizing:border-box"></div>
<div class="a" style="left:314px;top:660px;width:156px;height:30.5px;background:linear-gradient(#ffffff,#f3f3f3);border:1px solid #ababab;border-top:none;border-radius:0 0 3px 3px;box-sizing:border-box"></div>
<svg style="left:234.5px;top:666.5px" width="14" height="15.6" viewBox="255 105 280 335"><path d="M258 165 L300 110 H535 V175 L365 440 H258 Z" fill="#ff5a5e"/><path d="M258 165 L300 110 H535 L480 165 H315 V380 L258 440 Z" fill="#d23038"/>
<path d="M315 165 H480 V222 H375 V290 H420 V340 H375 V380 H315 Z" fill="#fff"/>
<path d="M535 175 V228 L503 262 L532 290 L520 332 L482 336 L470 380 L432 386 L420 412 L382 416 L365 440 H320 L375 380 V340 H420 V290 H375 V222 H480 V200 Z" fill="#3a8ae8"/></svg>
<span class="t " style="left:253.0px;top:668.4px;font-size:12px;line-height:17px;color:#000;letter-spacing:-0.188px;">Start</span>
<svg style="left:285px;top:669.8px" width="13" height="12" viewBox="0 0 13 12"><path d="M1.4 1.2 C4 3 8 7 11.6 10" stroke="#111" stroke-width="1.7" fill="none" stroke-linecap="round"/><path d="M10.4 0.8 C8 3 4.6 6.6 1 10.8" stroke="#111" stroke-width="2.3" fill="none" stroke-linecap="round"/></svg>
<svg style="left:328.2px;top:667px" width="12" height="15.6" viewBox="0 0 12 15.6"><path d="M0.6 0.6 H8 L11.4 4 V15 H0.6 Z" fill="#fafafa" stroke="#777" stroke-width="0.9"/><path d="M8 0.6 V4 H11.4" fill="#e4e4e4" stroke="#777" stroke-width="0.7"/>
<path d="M1.8 7 L5.4 5.6 L8.6 6.8 V11 L5 12.8 L1.8 11.4 Z" fill="#3465a4" stroke="#1a3c6c" stroke-width="0.6"/><path d="M1.8 7 L5 8.2 L8.6 6.8 L5.4 5.6 Z" fill="#7fa8e0"/><path d="M5 8.2 V12.8" stroke="#1a3c6c" stroke-width="0.5"/><circle cx="8" cy="5.2" r="2.2" fill="#ef2929" stroke="#b01010" stroke-width="0.4"/></svg>
<span class="t " style="left:345.5px;top:668.9px;font-size:12px;line-height:17px;color:#000;letter-spacing:-0.601px;">AileMucha_V5 : 1*</span>
<svg style="left:440.5px;top:670.2px" width="13" height="12" viewBox="0 0 13 12"><path d="M1.4 1.2 C4 3 8 7 11.6 10" stroke="#111" stroke-width="1.7" fill="none" stroke-linecap="round"/><path d="M10.4 0.8 C8 3 4.6 6.6 1 10.8" stroke="#111" stroke-width="2.3" fill="none" stroke-linecap="round"/></svg>
<svg style="left:483.6px;top:666.6px" width="12" height="15.6" viewBox="0 0 12 15.6"><path d="M0.6 0.6 H8 L11.4 4 V15 H0.6 Z" fill="#fafafa" stroke="#777" stroke-width="0.9"/><path d="M8 0.6 V4 H11.4" fill="#e4e4e4" stroke="#777" stroke-width="0.7"/>
<path d="M1.8 7 L5.4 5.6 L8.6 6.8 V11 L5 12.8 L1.8 11.4 Z" fill="#3465a4" stroke="#1a3c6c" stroke-width="0.6"/><path d="M1.8 7 L5 8.2 L8.6 6.8 L5.4 5.6 Z" fill="#7fa8e0"/><path d="M5 8.2 V12.8" stroke="#1a3c6c" stroke-width="0.5"/><circle cx="8" cy="5.2" r="2.2" fill="#ef2929" stroke="#b01010" stroke-width="0.4"/></svg>
<span class="t " style="left:501.6px;top:668.4px;font-size:12px;line-height:17px;color:#000;letter-spacing:-0.380px;">testMuscha : 1*</span>
<svg style="left:585.8px;top:669.8px" width="13" height="12" viewBox="0 0 13 12"><path d="M1.4 1.2 C4 3 8 7 11.6 10" stroke="#111" stroke-width="1.7" fill="none" stroke-linecap="round"/><path d="M10.4 0.8 C8 3 4.6 6.6 1 10.8" stroke="#111" stroke-width="2.3" fill="none" stroke-linecap="round"/></svg>
<span class="t " style="left:2.0px;top:702.5px;font-size:12px;line-height:17px;color:#000;letter-spacing:-0.664px;">Preselected: AileMucha_V3.Sweep.Face2 (6.26 mm, 9.98 mm, 1.60 mm)</span>
<div class="a" style="left:1045px;top:703.5px;width:14px;height:13px;background:linear-gradient(135deg,#5e8dcc,#2c5a9a);"></div>
<span class="t " style="left:1064.4px;top:702.5px;font-size:12px;line-height:17px;color:#000;letter-spacing:-1.074px;">16</span>
<div class="a" style="left:1112.3px;top:708.6px;width:0;height:0;border-left:3px solid transparent;border-right:3px solid transparent;border-top:3.4px solid #555"></div>
<svg style="left:1148px;top:704px" width="10" height="13" viewBox="0 0 10 13"><rect x="0.8" y="0.8" width="8" height="11.2" rx="3.6" fill="#fff" stroke="#333" stroke-width="1.3"/><path d="M4.8 2.6 V5.6" stroke="#333" stroke-width="1.4"/></svg>
<span class="t " style="left:1162.8px;top:702.5px;font-size:12px;line-height:17px;color:#000;letter-spacing:-1.645px;">CAD</span>
<div class="a" style="left:1198px;top:708.6px;width:0;height:0;border-left:3px solid transparent;border-right:3px solid transparent;border-top:3.4px solid #555"></div>
<span class="t " style="left:1219.4px;top:702.5px;font-size:12px;line-height:17px;color:#000;letter-spacing:-0.656px;">1480,28 mm x 1110,21 mm</span>
<div class="a" style="left:1354px;top:708.6px;width:0;height:0;border-left:3px solid transparent;border-right:3px solid transparent;border-top:3.4px solid #555"></div>
<div class="a" style="left:0;top:728px;width:1366px;height:40px;background:linear-gradient(90deg,#19222f 0,#1b222d 35%,#1e1f22 52%,#1d1e21 62%,#1b1f27 75%,#19202a 100%)"></div>
<div class="a" style="left:48px;top:728px;width:288px;height:40px;background:#f2f2f2;border-top:1px solid #d8d8d8;box-sizing:border-box"></div>
<svg style="left:16px;top:740px" width="17" height="17" viewBox="0 0 17 17"><path d="M0 2.4 L7 1.4 V8 H0 Z M8 1.2 L16.4 0 V8 H8 Z M0 9 H7 V15.6 L0 14.6 Z M8 9 H16.4 V17 L8 15.8 Z" fill="#fff"/></svg>
<svg style="left:59px;top:739px" width="18" height="18" viewBox="0 0 18 18"><circle cx="11" cy="6.6" r="5.2" fill="none" stroke="#222" stroke-width="1.3"/><path d="M7.2 10.4 L1 16.8" stroke="#222" stroke-width="1.4"/></svg>
<span class="t " style="left:88.0px;top:738.0px;font-size:15px;line-height:21px;color:#2b2b2b;letter-spacing:-0.116px;">Taper ici pour rechercher</span>
<svg style="left:351px;top:739px" width="18" height="17" viewBox="0 0 18 17"><g fill="none" stroke="#fff" stroke-width="1.2"><path d="M2.2 3.6 H11.8 V12.8 H2.2 Z"/><path d="M1 0.8 H12.8 M1 15.6 H12.8"/><path d="M15.8 1 V4 M15.8 8.4 V15.4"/></g><rect x="14.6" y="4.8" width="2.4" height="2.8" fill="#fff"/></svg>
<svg style="left:399px;top:736px" width="24" height="24" viewBox="0 0 24 24"><defs><linearGradient id="cp1" x1="0.3" y1="0" x2="0.7" y2="1"><stop offset="0" stop-color="#2a78e8"/><stop offset="0.45" stop-color="#8a5af0"/><stop offset="1" stop-color="#f0589a"/></linearGradient><linearGradient id="cp2" x1="0.3" y1="0" x2="0.6" y2="1"><stop offset="0" stop-color="#1a9ae8"/><stop offset="0.35" stop-color="#3cc878"/><stop offset="0.65" stop-color="#f0c83a"/><stop offset="1" stop-color="#f07a38"/></linearGradient></defs>
<path d="M9 2 H15 C17.6 2 18.6 3.6 19.2 5.6 L21.6 13 C22.4 16 21 18.6 18 18.6 H16.6 L14 8 C13.4 5.6 12.4 4.6 10.4 4.6 H7 C7.4 3 8 2 9 2 Z" fill="url(#cp1)"/><path d="M15 22 H9 C6.4 22 5.4 20.4 4.8 18.4 L2.4 11 C1.6 8 3 5.4 6 5.4 H7.4 L10 16 C10.6 18.4 11.6 19.4 13.6 19.4 H17 C16.6 21 16 22 15 22 Z" fill="url(#cp2)"/><path d="M7.4 5.4 H10.4 C12.4 5.4 13.2 6.4 13.8 8.4 L14.4 11 C12 11 10.2 12.6 9.4 14 Z" fill="#2a8ae8" opacity="0.55"/></svg>
<svg style="left:448px;top:736px" width="25" height="25" viewBox="0 0 25 25"><defs><linearGradient id="ed1" x1="0" y1="0.6" x2="1" y2="0.2"><stop offset="0" stop-color="#1b6fd0"/><stop offset="0.55" stop-color="#2fb8e0"/><stop offset="1" stop-color="#58d878"/></linearGradient><linearGradient id="ed2" x1="0" y1="0" x2="1" y2="1"><stop offset="0" stop-color="#1565c0"/><stop offset="1" stop-color="#0c4a94"/></linearGradient></defs>
<circle cx="12.5" cy="12.5" r="12" fill="url(#ed1)"/><path d="M2.2 16 C2.6 11 6.6 8 11 8 C14.4 8 16.4 10 16.4 12 C16.4 13.6 15.2 14 15.2 15 C15.2 16.6 17 17.4 19.4 17.4 C21 17.4 22.6 16.6 23.6 15.6 C22.4 20.6 18 24.4 12.6 24.4 C7.6 24.4 3 20.8 2.2 16 Z" fill="url(#ed2)"/><path d="M8.8 13 C8.8 18 12.8 21.6 17.6 21.4 C15.8 23.2 14 24.2 12.4 24.4 C7 24.2 2.6 20 2.2 16 C2.8 12 6.4 8 11 8 C9.6 9.4 8.8 11 8.8 13 Z" fill="#1e7ad8"/></svg>
<svg style="left:497px;top:737px" width="24" height="22" viewBox="0 0 24 22"><path d="M1 2.6 H9 L11 5 H23 V19.6 H1 Z" fill="#f0b429"/><path d="M1 7 H23 V19.6 H1 Z" fill="#fcd766"/><path d="M1 10 H23 V19.6 H1 Z" fill="#f7c948"/><path d="M7 14 H17 V20.6 H7 Z" fill="#3a8fd8"/><path d="M9.6 16.6 H14.4 V20.6 H9.6 Z" fill="#f7c948"/></svg>
<svg style="left:545px;top:736px" width="24" height="25" viewBox="0 0 24 25"><path d="M7.6 6 V4.6 C7.6 0.6 16.4 0.6 16.4 4.6 V6" fill="none" stroke="#35a0e8" stroke-width="1.6"/><path d="M1.6 6 H22.4 V21 C22.4 23 21.4 24 19.4 24 H4.6 C2.6 24 1.6 23 1.6 21 Z" fill="#f4f4f4"/><rect x="7.4" y="10.4" width="4" height="4" fill="#f25022"/><rect x="12.6" y="10.4" width="4" height="4" fill="#7fba00"/><rect x="7.4" y="15.6" width="4" height="4" fill="#00a4ef"/><rect x="12.6" y="15.6" width="4" height="4" fill="#ffb900"/></svg>
<svg style="left:594px;top:737px" width="26" height="22" viewBox="0 0 26 22"><path d="M1 8.6 L13 0.6 L25 8.6 V21 H1 Z" fill="#1a80d9"/><path d="M1 8.6 L13 16 L25 8.6 V21 H1 Z" fill="#35a2f0"/><path d="M1 21 L13 12.6 L25 21 Z" fill="#1a72c4"/><path d="M3.6 7.6 H22.4 V10 L13 16 L3.6 10 Z" fill="#e8f3fc"/><path d="M1 8.6 L13 16 L25 8.6 L25 10.4 L13 17.8 L1 10.4 Z" fill="#2b94e6"/></svg>
<svg style="left:644px;top:737px" width="24" height="24" viewBox="0 0 24 24"><circle cx="12" cy="11" r="10.6" fill="#2d9cf0"/><path d="M12 4 C8.4 4 6 6.6 6 9.6 C6 12 7.6 13.4 8.6 15 V17 H15.4 V15 C16.4 13.4 18 12 18 9.6 C18 6.6 15.6 4 12 4 Z" fill="#fff"/><rect x="9" y="18" width="6" height="3.6" rx="1" fill="#c8d4e0"/></svg>
<div class="a" style="left:681px;top:728px;width:48px;height:38px;background:#4b4a4d"></div>
<svg style="left:694.7px;top:735.7px" width="20.5" height="24.5" viewBox="255 105 280 335"><path d="M258 165 L300 110 H535 V175 L365 440 H258 Z" fill="#ff5a5e"/><path d="M258 165 L300 110 H535 L480 165 H315 V380 L258 440 Z" fill="#d23038"/>
<path d="M315 165 H480 V222 H375 V290 H420 V340 H375 V380 H315 Z" fill="#fff"/>
<path d="M535 175 V228 L503 262 L532 290 L520 332 L482 336 L470 380 L432 386 L420 412 L382 416 L365 440 H320 L375 380 V340 H420 V290 H375 V222 H480 V200 Z" fill="#3a8ae8"/></svg>
<svg style="left:743px;top:735.5px" width="22" height="25" viewBox="0 0 22 25"><defs><linearGradient id="oa1" x1="0" y1="0" x2="0" y2="1"><stop offset="0" stop-color="#1aa8f0"/><stop offset="1" stop-color="#0a6ad0"/></linearGradient><linearGradient id="oa2" x1="0" y1="0" x2="0" y2="1"><stop offset="0" stop-color="#c8c8c8"/><stop offset="0.6" stop-color="#8a8a8a"/><stop offset="1" stop-color="#4a4a4a"/></linearGradient></defs>
<path d="M13.6 0.6 H21.4 V18 C21.4 21.6 19.4 24.4 15.6 24.4 H9.6 V18 H13.6 Z" fill="url(#oa2)"/><path d="M0.6 6 C0.6 2.6 2.6 0.6 6 0.6 H13.6 L13.6 9 H9.6 V24.4 H0.6 Z" fill="url(#oa1)"/><path d="M9.6 9 H13.6 V18 H9.6 Z" fill="#101418"/></svg>
<svg style="left:791.5px;top:737px" width="23" height="23" viewBox="0 0 23 23"><rect x="0.5" y="0.5" width="22" height="22" rx="2.4" fill="#1e90e8"/><path d="M0.5 18 L8.6 9 L15 16 L11.6 22.5 H2.9 C1.5 22.5 0.5 21.5 0.5 20 Z" fill="#7fd0f8"/><path d="M8 22.5 L16 12.6 L22.5 19 V20 C22.5 21.5 21.5 22.5 20 22.5 Z" fill="#3fb0f4"/><circle cx="16.6" cy="6.4" r="2.2" fill="#d8f0fe"/></svg>
<div class="a" style="left:440.5px;top:766px;width:40px;height:2px;background:#7fbdf0"></div>
<div class="a" style="left:489px;top:766px;width:39.5px;height:2px;background:#7fbdf0"></div>
<div class="a" style="left:636.5px;top:766px;width:39px;height:2px;background:#7fbdf0"></div>
<div class="a" style="left:681px;top:766px;width:48px;height:2px;background:#7fbdf0"></div>
<div class="a" style="left:734px;top:766px;width:39.5px;height:2px;background:#7fbdf0"></div>
<div class="a" style="left:783px;top:766px;width:33.5px;height:2px;background:#7fbdf0"></div>
<div class="a" style="left:817px;top:766px;width:4px;height:2px;background:#5a90c0"></div>
<svg style="left:978px;top:736px" width="28" height="22" viewBox="0 0 28 22"><path d="M6 20 C2.6 20 0.6 17.8 0.6 15.2 C0.6 12.6 2.6 10.8 5 10.6 C5.6 6.6 8.6 4.6 12 4.6 C15.4 4.6 18 6.6 19 9.6 C22.6 9.6 25.4 11.8 25.4 15 C25.4 18 23 20 20 20 Z" fill="#9cc4f4"/><path d="M6 20 C2.6 20 0.6 17.8 0.6 15.2 C0.6 13.6 1.4 12.2 2.6 11.4 C6 16 16 17.6 25.2 13.6 C25.4 14 25.4 14.6 25.4 15 C25.4 18 23 20 20 20 Z" fill="#6f9fe4"/><circle cx="18.6" cy="6" r="5" fill="#d42a2a"/><text x="18.6" y="8.8" font-family="Liberation Sans, sans-serif" font-size="7.6" font-weight="bold" fill="#fff" text-anchor="middle">7</text></svg>
<span class="t " style="left:1011.8px;top:738.5px;font-size:15px;line-height:21px;color:#fff;letter-spacing:-1.379px;">14°C</span>
<span class="t " style="left:1049.6px;top:738.5px;font-size:15px;line-height:21px;color:#fff;letter-spacing:-0.749px;">Nuageux</span>
<svg style="left:1128px;top:744px" width="14" height="9" viewBox="0 0 14 9"><path d="M1 7.6 L7 1.6 L13 7.6" fill="none" stroke="#fff" stroke-width="1.3"/></svg>
<svg style="left:1152.5px;top:739.5px" width="14" height="18" viewBox="0 0 14 18"><g fill="none" stroke="#fff" stroke-width="1.1"><path d="M2.6 1 C4.6 0 8.4 0 10.4 1 M2.6 17 C4.6 18 8.4 18 10.4 17"/><rect x="0.8" y="5" width="8" height="8" rx="1.6"/><path d="M8.8 8 L12.8 5.6 V12.4 L8.8 10"/></g></svg>
<svg style="left:1174px;top:741px" width="18" height="14" viewBox="0 0 18 14"><g fill="none" stroke="#fff" stroke-width="1.1"><path d="M2 1 V3 M5 1 V3 M1 3 H6 V5.6 C6 7 5 7.6 3.6 7.6 C2 7.6 1 7 1 5.6 Z M3.6 7.6 V13"/><rect x="7" y="4" width="9" height="7"/><path d="M16 6.4 H17.4 V8.6 H16 M9.6 5.8 L13.4 9.4 M13.4 5.8 L9.6 9.4"/></g></svg>
<svg style="left:1201px;top:741px" width="15" height="14" viewBox="0 0 15 14"><g fill="none" stroke="#fff" stroke-width="1.2"><path d="M1.6 13 A11.6 11.6 0 0 1 13.4 1.4" opacity="0.55"/><path d="M4.6 13 A8.6 8.6 0 0 1 13.4 4.6"/><path d="M7.6 13 A5.6 5.6 0 0 1 13.4 7.6"/></g><circle cx="12" cy="11.8" r="1.4" fill="#fff"/></svg>
<svg style="left:1222px;top:740px" width="17" height="15" viewBox="0 0 17 15"><g fill="none" stroke="#fff" stroke-width="1.1"><path d="M0.8 5 H3.6 L7.4 1.4 V13.6 L3.6 10 H0.8 Z"/><path d="M9.6 5 C10.6 6.4 10.6 8.6 9.6 10"/><path d="M11.8 3 C13.6 5.4 13.6 9.6 11.8 12" opacity="0.7"/><path d="M14 1.2 C16.6 4.6 16.6 10.4 14 13.8" opacity="0.45"/></g></svg>
<span class="t " style="left:1263.6px;top:730.5px;font-size:12px;line-height:17px;color:#fff;letter-spacing:-0.646px;">22:32</span>
<span class="t " style="left:1249.0px;top:748.7px;font-size:12px;line-height:17px;color:#fff;letter-spacing:-0.276px;">07/12/2025</span>
<svg style="left:1324px;top:740px" width="26" height="26" viewBox="0 0 26 26"><path d="M1 0.8 H17 V11.4 H7 L3.6 14.6 V11.4 H1 Z" fill="#fff"/><path d="M3.6 3.6 H14.4 M3.6 6 H14.4 M3.6 8.4 H10" stroke="#1a222d" stroke-width="0.9"/><circle cx="16.8" cy="16" r="7" fill="#1a222d" stroke="#fff" stroke-width="1.1"/><text x="16.8" y="19.6" font-family="Liberation Sans, sans-serif" font-size="10" fill="#fff" text-anchor="middle">1</text></svg>
<div class="a" style="left:1361px;top:728px;width:1px;height:40px;background:#555d68"></div>
</body></html>
